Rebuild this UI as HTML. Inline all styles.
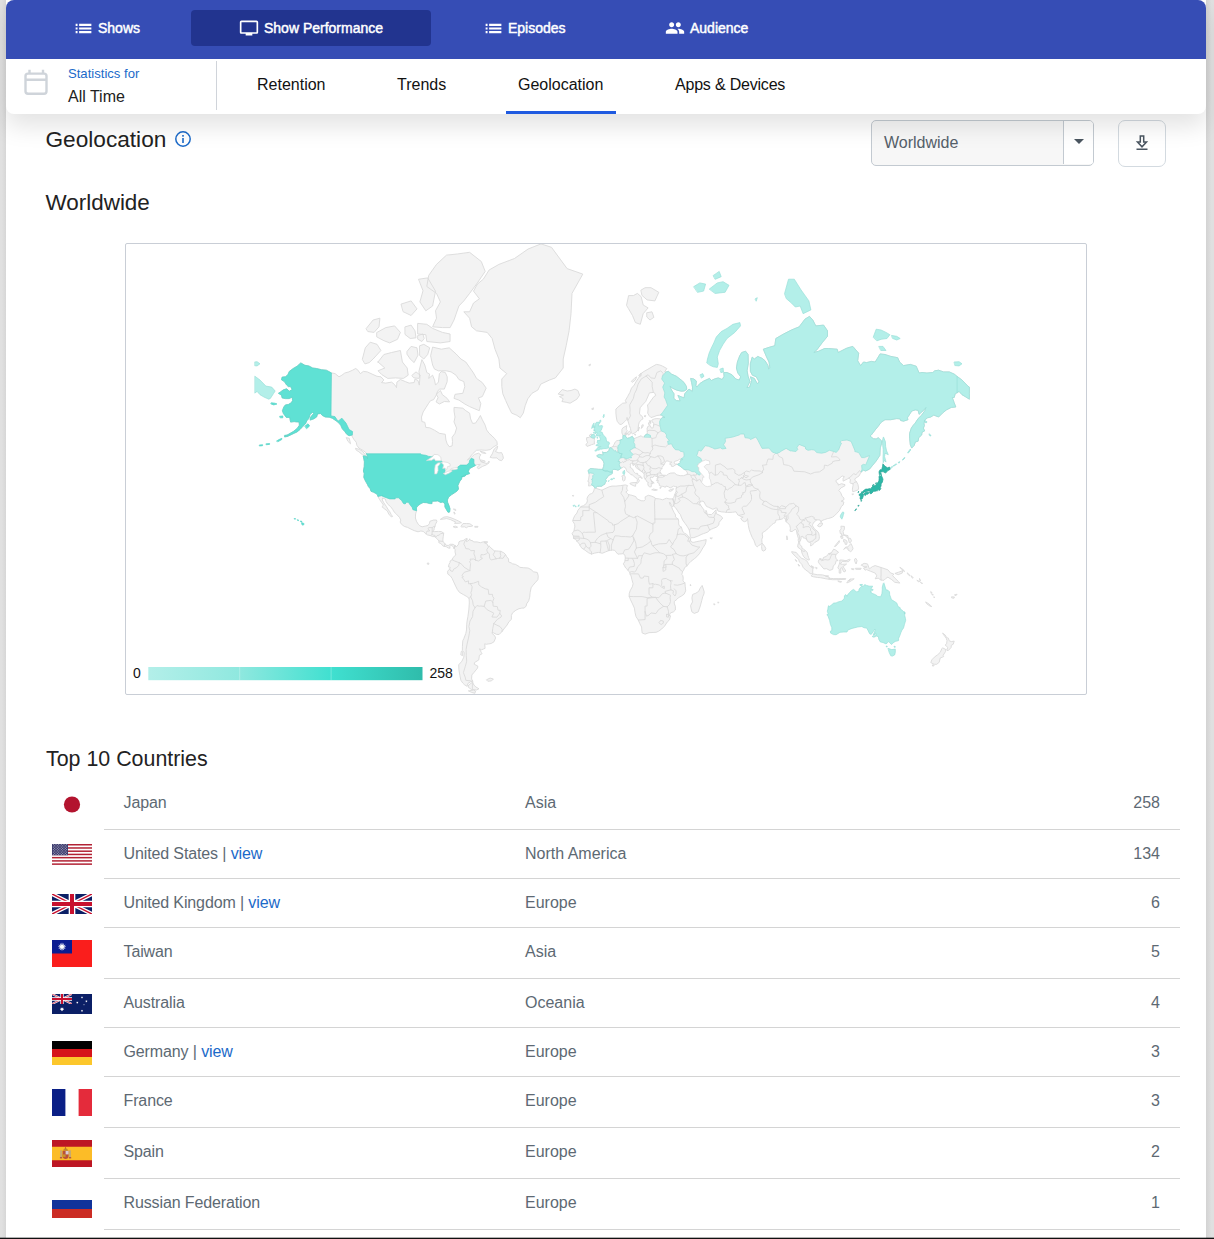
<!DOCTYPE html>
<html lang="en">
<head>
<meta charset="utf-8">
<title>Geolocation</title>
<style>
*{box-sizing:border-box;margin:0;padding:0}
html,body{width:1214px;height:1239px;overflow:hidden}
body{background:#e0e0e0;font-family:"Liberation Sans",Arial,sans-serif;color:#222;position:relative}
.panel{position:absolute;left:6px;top:0;width:1200px;height:1239px;background:#fff}
.rshade{position:absolute;left:1206px;top:0;width:8px;height:1239px;background:linear-gradient(90deg,#d3d3d3,#e0e0e0 70%)}
.lshade{position:absolute;left:0;top:0;width:6px;height:1239px;background:linear-gradient(90deg,#e0e0e0 30%,#d6d6d6)}
.header{position:absolute;left:6px;top:0;width:1200px;height:114px;background:#fff;border-radius:8px;box-shadow:0 12px 24px rgba(0,0,0,.115);z-index:5;overflow:hidden}
.topbar{position:absolute;left:0;top:0;width:1200px;height:58.5px;background:#364db5}
.nav{position:absolute;top:10px;height:36px;border-radius:4px;color:#fff;font-size:14px;font-weight:normal;-webkit-text-stroke:.45px #fff;line-height:36px;white-space:nowrap}
.nav.active{background:#22348f}
.nav svg{position:absolute;top:9px;fill:#fff}
.nav span{position:absolute;top:0}
.subbar{position:absolute;left:0;top:58.5px;width:1200px;height:56px}
.cal{position:absolute;left:17px;top:9px}
.sf{position:absolute;left:62px;top:7px;font-size:13.1px;color:#1b6ac9;line-height:15px;white-space:nowrap}
.at{position:absolute;left:62px;top:28px;font-size:16px;color:#222;line-height:20px;white-space:nowrap}
.vsep{position:absolute;left:210px;top:2px;width:1px;height:49px;background:#d0d4da}
.tab{position:absolute;top:16px;font-size:16px;line-height:20px;color:#111;white-space:nowrap}
.ul{position:absolute;left:500px;top:52.5px;width:110px;height:3px;background:#1f5ae0}
h1{position:absolute;left:45.5px;top:124px;font-size:22.65px;font-weight:normal;line-height:30px;color:#222;white-space:nowrap}
h2{position:absolute;left:46px;font-size:21px;font-weight:normal;line-height:30px;color:#222;white-space:nowrap}
.info{position:absolute;left:174px;top:130px}
.sel{position:absolute;left:871px;top:120px;width:223px;height:46px;border:1px solid #c3cad1;border-radius:5px;background:#f7f7f7;overflow:hidden}
.sel .t{position:absolute;left:12px;top:12px;font-size:16px;line-height:20px;color:#55606a}
.sel .a{position:absolute;left:191px;top:0;width:31px;height:43px;background:#fff;border-left:1px solid #c3cad1}
.sel .a i{position:absolute;left:10px;top:17.5px;width:0;height:0;border-left:5px solid transparent;border-right:5px solid transparent;border-top:5px solid #4a5560}
.dl{position:absolute;left:1118px;top:120px;width:48px;height:47px;border:1px solid #d3dae0;border-radius:7px;background:#fff}
.dl svg{position:absolute;left:11px;top:10px}
.map{position:absolute;left:125px;top:243px;width:962px;height:452px;border:1px solid #c9ced6;border-radius:2px;background:#fff;overflow:hidden}
.map svg{position:absolute;left:-1px;top:-1px}
.tbl{position:absolute;left:46px;top:779px;width:1134px}
.row{position:relative;width:1134px}
.row .ln{position:absolute;left:58px;right:0;bottom:0;height:1px;background:#d4d4d4}
.row .fl{position:absolute;left:6px}
.row .c1,.row .c2,.row .c3{position:absolute;font-size:16px;line-height:20px;color:#5d6973;white-space:nowrap}
.row .c1{left:77.5px;letter-spacing:-.12px}
.row .c2{left:479px}
.row .c3{right:20px;text-align:right}
.row a{color:#1b6ac9;text-decoration:none}
.botline{position:absolute;left:0;top:1237px;width:1214px;height:2px;background:linear-gradient(rgba(0,0,0,.3) 50%,#111 50%);z-index:9}
</style>
</head>
<body>
<div class="lshade"></div><div class="rshade"></div>
<div class="panel"></div>

<div class="header">
  <div class="topbar">
    <div class="nav" style="left:52px;width:100px"><svg style="left:14.5px;top:7.5px" width="21" height="21" viewBox="0 0 24 24"><path d="M3 13.200h2.200v-2.400H3v2.400zm0 4.100h2.200v-2.400H3v2.400zm0-8.200h2.200V6.700H3v2.400zm4 4.100h14v-2.400H7v2.400zm0 4.100h14v-2.400H7v2.400zM7 6.700v2.400h14V6.700H7z"/></svg><span style="left:40px">Shows</span></div>
    <div class="nav active" style="left:185px;width:240px"><svg style="left:48px;top:8px" width="20" height="20" viewBox="0 0 24 24"><path d="M21 3H3c-1.1 0-2 .9-2 2v12c0 1.1.9 2 2 2h5v2h8v-2h5c1.1 0 1.99-.9 1.99-2L23 5c0-1.1-.9-2-2-2zm0 14H3V5h18v12z"/></svg><span style="left:73px">Show Performance</span></div>
    <div class="nav" style="left:462px;width:110px"><svg style="left:14.5px;top:7.5px" width="21" height="21" viewBox="0 0 24 24"><path d="M3 13.200h2.200v-2.400H3v2.400zm0 4.100h2.200v-2.400H3v2.400zm0-8.200h2.200V6.700H3v2.400zm4 4.100h14v-2.400H7v2.400zm0 4.100h14v-2.400H7v2.400zM7 6.700v2.400h14V6.700H7z"/></svg><span style="left:40px">Episodes</span></div>
    <div class="nav" style="left:643px;width:110px"><svg style="left:16px;top:8px" width="20" height="20" viewBox="0 0 24 24"><path d="M16 11c1.66 0 2.99-1.34 2.99-3S17.66 5 16 5c-1.66 0-3 1.34-3 3s1.34 3 3 3zm-8 0c1.66 0 2.99-1.34 2.99-3S9.66 5 8 5C6.34 5 5 6.34 5 8s1.34 3 3 3zm0 2c-2.33 0-7 1.17-7 3.500V19h14v-2.500c0-2.330-4.670-3.5-7-3.500zm8 0c-.29 0-.62.02-.97.05 1.16.84 1.970 1.970 1.970 3.450V19h6v-2.500c0-2.330-4.670-3.5-7-3.500z"/></svg><span style="left:41px">Audience</span></div>
  </div>
  <div class="subbar">
    <svg class="cal" width="26" height="30" viewBox="0 0 26 30"><rect x="2.5" y="5.6" width="21" height="20.1" rx="2.5" fill="none" stroke="#cfd4da" stroke-width="2.4"/><path d="M2.5 11.800h21M6.5 1.800v3.800M20 1.800v3.8" stroke="#cfd4da" stroke-width="2.4" fill="none"/></svg>
    <div class="sf">Statistics for</div>
    <div class="at">All Time</div>
    <div class="vsep"></div>
    <div class="tab" style="left:251px">Retention</div>
    <div class="tab" style="left:391px">Trends</div>
    <div class="tab" style="left:512px">Geolocation</div>
    <div class="tab" style="left:669px;letter-spacing:-.2px">Apps &amp; Devices</div>
    <div class="ul"></div>
  </div>
</div>

<h1>Geolocation</h1>
<svg class="info" width="18" height="18" viewBox="0 0 18 18"><circle cx="9" cy="9" r="7.2" fill="none" stroke="#1b6ac9" stroke-width="1.5"/><rect x="8.2" y="8" width="1.6" height="5" fill="#1b6ac9"/><rect x="8.2" y="5" width="1.6" height="1.7" fill="#1b6ac9"/></svg>
<div class="sel"><div class="t">Worldwide</div><div class="a"><i></i></div></div>
<div class="dl"><svg width="24" height="24" viewBox="0 0 24 24"><path d="M7.5 11h2.800V5h3.400v6h2.800L12 15.800zM6.5 18.200h11" fill="none" stroke="#4a5560" stroke-width="1.5"/></svg></div>
<h2 style="top:188px;font-size:22.45px;left:45.5px">Worldwide</h2>

<div class="map"><svg width="962" height="452" viewBox="125 243 962 452">
<defs><linearGradient id="lg" x1="0" x2="1" y1="0" y2="0"><stop offset="0" stop-color="#b3efe9"/><stop offset="0.3333" stop-color="#8fe8df"/><stop offset="0.6667" stop-color="#40e0d0"/><stop offset="1" stop-color="#2fbcab"/></linearGradient></defs>
<g stroke-linejoin="round" stroke-linecap="round">
<path fill="#f3f3f3" stroke="#dadada" stroke-width="0.9" d="M331.2 372.8L335.1 373.6L339 376.8L341.9 375.2L344.8 373L348.8 371.9L352.6 370.2L355.6 368.5L357.5 369.7L360.4 373.6L363.4 371.4L367.3 371.9L372.1 374.1L377 376.3L380.9 376.8L383.9 380L381.5 382.6L385.8 383.1L391.6 382.1L394.6 384.6L396.5 387.6L396.9 382.1L400.4 379.5L405.3 381.6L409.2 383.1L414.1 382.6L415 379L418 380.5L419.3 385.1L419.9 377.4L418.9 371.4L421.9 359.6L424.8 365L426.8 372.5L429.7 374.1L428.7 378.4L432.6 375.2L434.5 380L435.5 385.1L438.4 382.1L439.4 373.6L441.4 371.6L445.3 372.5L447.2 376.8L447.2 381.6L444.3 389.1L439.4 389.1L437.5 391.4L436.5 394.7L433.6 399.7L430.6 400.6L428.7 403.2L425.8 407.8L423.2 411.9L421.5 417L421.9 421.6L424.8 422.3L425.8 427.4L429.7 427.8L434.5 430.2L439.4 433.3L445.3 434.3L445.9 440L447.2 443.8L449.2 446.6L452.1 446L452.5 441.6L452.1 437.3L455 433.3L456.6 428.1L454 421.9L455 417L454 411.1L454 407.4L458.9 407.8L462.8 408.2L465.8 410.7L469.6 413.1L470.6 418.9L472.6 423.4L475.5 423.1L478.4 418.9L480.4 415.5L482.3 419.7L485.2 425.2L486.6 429.9L489.1 433.3L492.1 436L494.4 438.3L496.9 441.6L497.3 444.7L494 446.6L490.1 449.7L486.2 450.3L481.3 450L476.5 450.3L472.6 453.8L469.6 457.6L467.3 460.2L470.6 457.9L474.5 454.4L478.4 453.2L480.8 454.7L479.4 457L479.8 459.6L481.3 461.8L484.3 462.9L487.2 463.5L489.1 461L489.1 462.9L486.2 464.9L482.3 466.5L478.4 468.9L477.1 467.3L480.4 464.3L477.4 464.6L475.5 465.4L472.6 467L469.6 468.6L468.3 471.3L469.6 473.6L467.1 474.4L462.8 475.9L461.9 477L461.5 479.2L459.9 481L458.9 483.2L457.9 485.6L458.5 489L457 491.1L454.2 493L451.7 494.6L448.6 497.1L447.4 500L447.6 502.3L449 505.6L450 508.8L449.6 512.1L448 512.3L446.6 509.9L444.9 506.9L444.9 504L442.9 502L440.6 502.5L437.9 500.9L434.5 501.2L432 501.2L432 503.6L429.7 503.6L426.8 502.7L423.2 502.5L420.9 503.6L418 505.6L416.4 507.8L416.6 510.7L415.6 513.8L415.4 518L416.4 521.1L418.2 524.2L419.9 525.8L422.1 526.8L425.8 526L428.1 525.4L429.5 523.3L429.9 521.3L433.6 520L436.5 520L436.9 521.7L435.5 524.2L434.9 526.6L434.2 528.2L434 530.2L432.8 531.4L434.7 531.6L438.4 531.4L441.4 531.6L443.7 533.2L443.3 536.2L442.9 539.2L442.9 541.2L444.3 543.1L445.9 545.1L448.2 545.5L450.5 544.3L453.1 544.3L455.2 545.7L454.2 548.6L453.3 546.6L451.1 545.3L449.6 546.6L450.1 548.2L448.2 548L446.2 546.6L444.3 546.4L442.9 545.9L440.8 543.5L438.8 542.7L439 541L437.1 538.8L435.5 537.4L435.1 536.6L432.6 536.6L430.6 535.6L427.7 535L426.2 534L423.2 531.4L420.9 531L418 531.8L414.1 530.6L411.1 529.2L407.6 527.4L404.3 526.4L401.4 524.2L400.2 522.1L400.8 520L399.4 517.3L396.5 514.2L394 511.8L392.6 509.3L390.7 506.7L387.8 504.3L386 501.4L385.4 499.1L382.5 498L382.3 500L383.9 502.9L386.2 506.2L387.9 509.1L389.7 511.6L391.1 514.4L392.6 516.5L391.3 516.9L388.7 514L387.4 511L384.8 509.1L381.9 506.7L383.5 505.1L381.5 502.3L379.6 499.6L377.8 496.2L377.4 494.6L375.3 493.2L373.7 492.3L371 491.3L370.2 488.7L368.4 486.6L367.3 484.2L366.3 482.5L364.7 479.5L363.8 477.2L364.2 473.6L363.4 471L364.2 466.5L364.4 461.8L363.2 455.9L366.3 456.2L367.5 458.5L367.1 454.4L366.1 453.8L365.7 452.4L362.8 450.3L358.9 448.1L356.9 445.4L356.2 442.2L354 439.6L352.3 436.7L352.3 435L349.1 435.7L346.8 434.3L344.8 431.6L342.3 428.8L340.9 425.6L339 423.1L336.1 420.8L332.2 418.2L329.2 417.2L325.3 417L322.4 415.5L320.5 413.5L317.6 413.9L316.6 417L313.6 418.9L310.1 420.1L310.7 417L313.6 413.5L312.7 412.3L310.1 414.3L308.8 418.6L306.8 420.8L305.5 423.8L302.9 426.3L300 429.5L297.1 431.9L294.1 433.3L291.2 434.7L288.3 436L284.6 436.3L287.3 435L290.2 433.3L293.2 431.6L297.1 428.5L299.4 425.2L299 421.9L296.7 421.9L294.1 421.6L290.6 422.1L290.2 420.1L289.7 417.4L286.3 417.4L283.4 413.5L282.4 410.7L283.8 407L285.4 404.9L288.3 404.5L291.2 402.8L292.6 400.6L292.2 397L289.3 398.6L285.4 398.6L282.1 397.9L281.5 395.2L278.4 393.3L280.5 391.9L283.4 389.8L286.7 388.8L289.3 391.2L292.2 389.5L290.6 386.6L288.3 386.6L286.7 385.1L284.4 381.6L281.5 379.8L282.1 377.1L285.4 376.8L287.9 374.7L289.3 371.4L293.2 368.5L297.1 366.2L300.8 362.9L304.9 365.3L308.8 365.9L312.7 368L316.6 368.5L321.4 369.7L326.3 370.2ZM520.5 417.4L523.3 413.1L525.2 405.7L527.8 398.8L532 393.3L537.9 390L540.8 384.1L549.6 380L555.4 377.9L563.2 368L563.2 359L566.2 345.7L569.1 330.8L571 313.7L572 293.4L582.8 274.1L567.1 268.6L551.5 247.3L541 243.9L528.1 249L514.5 258.5L498.9 264.4L489.1 270L483.3 279.2L477.4 284.1L473.5 291.1L479.4 298.8L473.5 303L469.6 311.8L463.8 311.8L469.6 318.2L471.6 326.8L476.5 330.8L487.2 332.4L492.1 338.5L495 349.2L498.9 359L499.9 368L506.7 373.6L501.8 379L501.8 386.6L502.8 393.8L505.7 400.6L508.6 407L511.6 413.1L516.4 415.1ZM558.4 393.8L562.3 389.5L567.1 391L571 390.5L574.9 389.1L577.9 390.5L579.6 395.2L576.9 399.2L570.1 403.2L566.2 402.3L561.9 401.5L563.2 398.8L559.4 396.6L563.2 395.2ZM479.4 410.3L480.8 403.6L478.4 397.9L482.3 396.6L486.2 388.1L482.3 382.6L476.5 378.4L473.5 373L469.6 367.4L465.8 362L460.9 359L456 353.9L449.2 347.8L441.4 349.2L432.6 347.1L430.6 355.8L432.6 365L434.5 369.1L438.4 370.8L441.4 370.8L446.2 370.8L451.1 371.9L456 375.2L458.9 379.5L463.8 381.6L464.8 386.6L462.8 393.3L455 394.3L454 398.4L458.9 400.1L464.8 404L469.6 406.6L474.5 408.7ZM378 362L383.9 354.5L391.6 352.5L400.4 350.5L402.4 362L407.2 368L408.2 375.2L403.4 378.4L395.5 377.9L387.8 378.4L381.9 374.7L378 370.8L384.8 368L378 362ZM362.4 359L365.3 347.8L370.2 342.2L377 344.3L380.9 350.5L373.1 359L369.2 362.6L365.3 363.8ZM457.9 253.9L469.6 252.3L481.3 261.5L485.2 271.4L477.4 282.9L469.6 293.4L463.8 300.9L458.9 306L454 320L450.1 327.6L442.4 327.6L432.6 326.8L436.5 318.2L435.5 310.8L440.4 301.9L436.5 293.4L426.8 286.5L428.7 275.4L436.5 264.4L446.2 255.4ZM418.9 279.2L427.7 277.9L435.5 291.1L432.6 306L425.8 310.8L419.9 301.9L422.9 291.1ZM418 323.4L426.8 324.3L432.6 328.4L442.4 332.4L450.1 334L450.1 341.5L440.4 342.9L426.8 341.5L425.8 334.7L418 334ZM377 332.4L385.8 327.6L394.6 325.9L400.4 332.4L397.5 339.3L389.7 342.9L383.9 340.7L377 337ZM405.3 326.8L411.1 325.1L415 330.8L416 337.8L410.2 338.5L405.3 334.7ZM419.9 345.7L423.8 344.3L429.7 347.8L427.7 354.5L423.8 359L419.9 355.8ZM407.2 351.2L411.1 346.4L417 347.8L418 355.1L414.1 362.6L410.2 359L407.2 354.5ZM412.1 375.2L416 371.9L420.3 375.2L418.9 378.4L414.1 377.9ZM436.5 393.8L440.4 390.5L442.4 394.7L447.2 398.4L449.6 401.9L444.3 401.5L439.4 404L436.1 401.9L437.9 397.9ZM366.3 328.4L373.1 320L379.9 318.2L379 326.8L374.1 332.4L368.2 331.6ZM401.4 304L411.1 300.9L417 308.9L411.1 315.5L403.4 311.8ZM418 335.5L422.9 334L424.2 338.5L421.9 341.5L418 339.3ZM490.3 457L492.3 453.8L494.2 449L497.7 446L497.1 449L495.4 451.5L498.9 452.9L501.6 452.6L502.8 455.3L503.4 458.2L501.6 460.7L498.9 459.9L496.9 457.9L493 457.9ZM355.8 448.4L359.5 449.4L362.4 451.2L365.1 454.4L365.3 455.9L362.4 454.7L358.9 451.8L356.5 450.3ZM346.6 437.7L349.3 438.3L350.5 443.8L348.2 441.6ZM480.4 451.2L485.2 452.6L485.8 453.5L482.1 452.9ZM480.6 459.9L485.2 461L484.3 462.4L481.3 461.6ZM440.6 519.2L443.9 517.1L447.2 516.7L451.1 517.8L455 519.4L458.7 521.1L461.5 522.7L458.9 523.3L454.6 523.4L455.6 521.9L453.1 520.9L450.5 519.6L446.6 518.6L444.3 519ZM461.1 526.2L463 523.5L466.3 523.5L469.8 523.7L472.8 525.8L471 526.4L468.1 526.6L466.3 527.8L464.6 526.8L462.2 527ZM453.5 526.6L455.6 526.2L457.6 527.2L455.6 527.6ZM475.1 526.4L478 526.4L477.8 527.2L475.1 527.2ZM453.7 509.1L455.6 509.3L455.8 510.6L454.2 509.7ZM453.9 512.5L454.6 514.2L455.2 513.8L454.4 512.3ZM485.6 541.8L487.4 541.6L487.2 542.9L485.6 542.9ZM455.2 545.7L456.2 547L458.7 544.1L458.9 541.9L460.3 541L463.2 540.6L465.8 538.8L467.1 538.4L467.1 539.6L465.9 540.2L466.5 541.6L469.3 540L469.6 538.8L470.2 540.2L472.8 540.8L473.5 541.9L477.1 541.9L480.4 542.7L483.3 541.8L485.4 541.8L483.9 542.5L487.2 544.1L487.6 545.9L489.5 546.4L492.1 549L494.4 550.9L498.5 551.1L500.8 551.3L503.8 552.8L505.3 554.2L506.7 556.7L508.6 559L508.6 561.9L511.6 563.1L512.5 563.8L515.5 564.4L519.4 566.7L519.8 567.3L523.3 567.7L528.1 568L531.1 569.6L533.6 571.8L537.3 572.5L538.3 576.2L537.9 579.7L535 582.9L533 585.2L531.1 587.8L530.1 592.8L529.7 597.2L528.7 600.8L526.6 603.9L526.2 606L524.2 608.1L521.9 608.1L519 608.7L515.9 610.2L512.5 612.9L511.4 615.5L511.4 619.4L509 621.6L507.1 625L504.6 628.1L502 631.6L499.1 634.5L496.6 634.4L492.3 632.3L492.3 633.7L494.6 635.6L495.6 637.9L494 641.8L491.1 643.5L486.2 644.3L484.7 643.8L485.1 648.3L481.7 649.8L479.4 648.8L481.3 652.4L482.1 653.7L479.4 655.3L478.8 659.9L474.5 662.6L474.3 664.3L477.8 666L477.6 668L474.3 672.1L471.8 675L471.6 679L472.8 681.2L470.6 681.8L467.9 683.4L467.1 686.3L464.8 685L462.8 683.1L460.9 680.3L459.9 675.6L458.9 669.7L458.7 664.8L461.9 661.2L463.8 657.2L464.2 652.7L462.4 650.6L462.4 646.3L462.8 640.6L463.8 638.7L465.8 633.4L466.5 630L466.7 624.3L467.1 621L467.9 616.6L468.9 609.1L469.3 602.9L469.1 598.4L466.9 596.6L463.8 594.8L459.5 592.4L457.4 589.6L455.6 586L453.7 581.9L452.1 578.4L450.3 575.8L447.8 574.1L447.6 571.2L449.6 569.1L450.3 567.3L448.4 566.9L449 564.2L450 562.5L450.1 561L452.3 559.6L452.9 557.7L455 555.7L455.8 555L455 551.9L455.2 549.7L454.2 548.6ZM472.4 682.3L468.7 685L468.1 687L471.6 689.7L473 689.5L476.5 690L479 688.8L475.9 687L473.9 685L473.2 683.4ZM469.6 690.7L473.5 690L475.5 691L474.9 693.3L471.6 692.4L468.7 691ZM486.8 679.6L490.1 678.1L493.4 679L491.5 680.9L488.2 681.2ZM461.7 651.4L462.8 651.9L462.6 655.6L461.1 655ZM427.7 563.1L428.9 563.1L428.7 564.4L427.7 564.2ZM594.6 488.5L595.8 488.3L600.3 489.7L601.9 490.2L605 488.7L609.1 486.8L612 486.1L615.9 486.1L620.8 485.6L625.3 484.9L627.6 485.6L626.8 487.1L626.8 489.2L627.8 490.4L625.8 492L627.6 493.7L628.6 494.6L631.9 495.3L635.8 496.6L636.8 498.7L641.2 500.7L644.2 500.9L645.3 499.6L645.1 496.9L648.3 495.3L651.2 496L654.9 497.6L655.3 498.5L659.4 498.9L662.7 499.8L664.6 498.9L666.6 498.2L669.1 498.9L672.8 498.9L674.2 502.9L673.2 506.2L672.9 506.8L671.7 505.6L669.7 502L669.3 502.9L670.5 505.6L671.7 506.9L672.4 509.1L674.2 512.7L675.6 515L675.4 516.9L678.1 519L678.7 521.1L678.7 524L679.3 525.8L681.4 527.2L682.6 531.2L683.2 532L684.5 533.2L686.5 534.2L688.8 536.8L690.2 537.8L690.6 540L690 540.2L690.6 540.4L691.9 542.2L693.9 542.3L696.8 541.6L699.8 541L702.7 540.4L706.2 539.6L705.8 542.3L705.2 544.3L703.3 547.2L701.7 549.9L699.8 553.2L696.8 556.7L694.5 558.6L691 561.3L689 563.3L687.1 565.8L684.7 567.5L683.6 570.2L682.6 571.6L681.8 574.5L682.8 575.6L683.2 578L683 580.9L684.9 582.9L685.3 586.8L685.7 590.8L684.1 594.2L681.2 596.2L678.3 597.8L676.9 599.4L674.2 601.5L674.4 603.9L675.4 606.4L675.4 610L673.4 611.9L670.5 612.9L669.7 614.4L670.3 616.4L669.5 619.9L667.6 621.6L666.6 623L664.6 626.1L661.7 629L658.8 631.1L656.1 632.3L652 632.5L649 632.7L645.1 634.1L642.2 633L641.8 630L641.6 627L639.9 623.8L638.3 620.1L636 616.6L635 612.3L634.4 608.1L632.5 603.9L630.5 599.8L629.2 596.4L629.2 593.8L630.1 590.8L632.3 586.8L633.1 583.8L631.9 579.5L631.1 576L630.1 574.1L629.5 572.2L629.2 571.8L628 570.2L625.6 567.9L624.3 565.4L623.3 563.8L624.7 561.9L624.9 560.6L625.3 558.1L625.1 556.1L624.7 554.8L622.9 553.6L622.3 553.8L619.8 554L617.9 554.2L615.9 551.9L614.7 550.3L612.8 550.1L610.8 550.3L608.5 550.7L605.8 551.8L602.2 553.3L600.1 552.7L598.4 552.4L594.4 553.2L591.5 554.1L588.6 552.8L585.1 550.3L583.7 549.2L581.8 548.2L580.4 546.1L579.4 544.1L577.7 542.1L576.9 541.2L575.7 539.4L573.6 538.4L573.4 536.4L573 535.2L572 533.8L573.4 531.6L574 531L574.4 528.2L574.9 527L574.6 524.4L574 523.1L572.9 521.5L573.2 519L574.9 515.4L576.9 513.1L577.9 510.3L581 506.5L583.7 505.6L586.6 503.2L587.4 500.9L587 498.5L588 496.2L589.6 494.3L591.3 493.7L592.9 492.7L593.9 490.4ZM702.3 585.8L704.2 591.8L704 593.8L702.7 596.8L701.7 600.8L700.3 606L698.2 611.9L694.3 613.4L691.9 611.9L691 608.1L690.6 605.6L692.5 601.9L691.9 597.8L692.7 594.4L695.9 593.2L698.8 591.2L699.8 588.8L701.3 586.6ZM588.6 485.6L589 482L587.8 481.5L588.6 479.2L589.2 475.2L588.8 473.4L588.8 472.9L588 470.5L590.5 468.5L594.8 468.9L598.7 469.3L602.6 469.4L603.6 466.5L604 463.5L603.6 461.8L601.9 459L600.3 457.9L597.6 457L596.8 455.6L599.3 454.4L602.2 454.9L603.2 454.7L602.6 451.8L603.8 452.6L606.5 452.4L609.1 450.6L609.3 448.1L611 447.5L612.8 446.6L613.9 444.7L615.3 441.9L616.9 440.6L619.8 440.3L622.3 439.3L622.9 438.7L623 435.3L621.9 433L621.9 429.5L622.9 427.8L626.8 425.6L626.2 429.5L627.4 430.6L625.6 433.3L624.9 435L625.5 435.7L625.8 437L627.4 438.3L629.7 437.7L632.3 436.3L633.8 438.7L637.4 437.3L641.2 435.7L642.4 437L644.4 436.8L645 435.2L647.1 434L647.3 432.6L647.2 431.3L647.1 428.1L648.3 426L650.2 425.6L651.4 428.1L653.1 427.9L653.6 424.9L653.9 423.1L652 421.9L651.8 420.1L654.3 418.9L656.9 418.6L660.8 418.9L662.7 417.4L665 417.4L662.7 416.3L661.9 415.1L660.4 415.1L656.9 415.5L654.9 416.3L651 417.6L649 415.5L647.7 413.1L648.1 409.1L647.5 404.9L648.3 404.5L651 400.6L653.9 396.6L655.7 395.6L654.9 393.3L653.3 392.4L649.4 392.9L647.7 397L645.7 401.5L642.2 405.3L640.1 407.8L639.5 413.1L639.7 414.3L642.4 416.6L643 418.9L641.4 419.7L639.3 422.3L638.5 424.9L638.1 429.2L637 431.3L634 433.3L632.3 433.8L631.3 433L630.9 430.9L630.5 428.5L629.4 425.6L628 421.2L627.8 420.5L627 417.4L626.6 419.7L624.7 421.6L621.8 424.2L619.8 424.5L617.1 421.2L616.3 417L615.9 413.1L615.9 409.1L618 407L622.7 403.2L626.4 402.8L625.3 400.6L627.6 396.6L629.9 392.4L631.5 388.1L634.2 385.1L636.4 381.1L638.3 378.4L641.2 373.6L643.2 371.9L647.1 369.7L651 367.4L656.3 364.4L659.8 365L662.7 366.2L666.8 368.5L664.6 371.9L666.2 371.9L668.5 371.4L671.5 374.1L676.4 376.3L681.2 380L684.1 382.6L686.5 386.6L686.7 389.5L684.1 391L681.2 391.2L676.4 390L672.4 388.1L669.9 386.1L671.5 390L674 393.8L673.8 398.4L676.4 400.6L680.2 401L679.3 398.4L677.9 395.4L681.2 396.8L684.1 397.9L684.7 393.8L687.1 391L689 389.1L692.3 391.4L692.5 387.1L691.6 382.6L690.6 378.4L693.9 379L696.4 381.1L695.9 385.6L696.8 387.1L699.8 383.6L703.6 381.1L709.5 378.4L711.4 380.5L714.4 379L718.3 377.9L722.2 379.5L724.1 376.3L723.7 372.5L727 372.5L731.9 374.7L735.8 379L739.3 380L740.7 376.8L737.8 373L736.4 368L737.4 362L739.7 355.8L741.7 352.5L745.6 351.2L748.1 354.5L748.3 363.2L747.1 370.8L748.1 376.3L749.9 381.6L746.9 387.6L749.7 387.1L751.6 380.5L750.4 376.8L754.3 378.4L757.3 383.6L759.2 382.1L756.3 376.8L752.4 375.2L750.4 371.4L750.3 363.8L752.2 357.1L754.3 359L757.9 356.4L759.2 357.1L762.1 358.3L765.1 360.8L768 365.6L768.6 369.1L769.9 368L769 362L766.6 357.1L763.3 349.2L769.9 347.1L774.8 345.7L775.8 338.5L783.6 334L791.4 330L799.2 326.8L805 319.1L809.5 316.4L812.8 320L815.8 325.9L823.6 325.1L827.5 330.8L827.5 336.3L822.6 342.2L816.8 349.9L813.8 352.5L818.7 351.2L824.5 348.5L828.4 348.5L837.2 349.2L838.2 352.5L846 348.5L847.9 347.8L852.8 346.4L858.7 353.2L857.7 360.8L860.6 365.6L863.5 362L866.5 362.6L871.3 361.4L875.2 362L878.2 357.1L880.1 353.9L885 354.5L890.8 356.4L897.7 357.7L899.6 362L903.5 365.6L910.3 364.4L916.2 366.2L919.1 373L922 372.5L926.9 373L932.8 372.5L934.7 370.8L938.6 370.2L943.5 371.9L949.3 371.9L954.2 374.1L957.1 376.4L962 380L967.9 386.1L969.4 387.1L969.4 391L969.4 393.3L969.4 398.4L969.4 399.2L965.9 397L962 394.7L959.1 391.4L955.2 393.8L954.2 397.5L952.3 397.5L954.2 402.8L955.8 407L951.3 407.4L946.4 409.9L942.5 413.1L938.6 417L933.8 415.1L930.8 417L927.5 417.8L924.6 420.1L924 423.8L924.4 425.6L923.4 428.1L924.6 430.9L922 432.3L921.7 435L918.7 437.7L918.1 441.2L915.4 441.9L914.2 445.4L911.7 448.1L910.3 444.7L909.6 438.3L909.6 433.3L911.3 428.1L913.3 425.2L915.2 423.1L918.1 418.6L921.7 415.1L924.8 410.7L926 407.4L923.6 410.3L919.1 414.3L918.1 410.3L915.2 409.9L911.7 411.1L908.4 416.3L907.4 417.8L908 419.7L903.5 421.2L900.6 420.5L900.2 418.9L896.7 418.6L890.8 419.7L885 419.7L881.1 422.3L878.2 426.3L875.2 429.9L871.3 435L870 436L873.3 438.7L876.2 439L878.2 437.7L881.7 440.9L881.5 443.8L880.3 447.8L880.1 450.9L879.9 455.3L876.2 461L872.3 465.7L869.4 469.2L865.5 471L863.4 470.2L861 472.1L859.1 475.9L855 478.7L854.8 480.2L856.5 481.7L857.9 484.4L858.7 488L858.1 489.9L855.4 490.9L852.8 491.8L852.4 489.2L853 485.6L853 483.8L850.5 483.2L849.9 482.7L850.5 479.5L848.7 478.2L847.9 478.7L844 480.7L843.1 481.2L843.1 478.2L844.4 476.7L842.1 475.9L839.2 478.5L835.7 480.7L837.2 483.2L838.2 483.7L838.2 485.1L841.5 483.7L845 484.7L844.8 485.9L841.1 487.8L838.8 490.4L840.7 492.7L842.1 496.2L843.9 498L843.9 499.8L841.1 501.2L843.9 502L843.1 505.1L841.5 506.2L839.4 510.6L836.4 513.8L834.3 515.9L832.3 517.3L828.8 518.4L827.5 518.6L824.5 519.6L821.6 520.7L821.2 522.5L820.1 520L817.3 519.8L816.8 519.9L814.4 521.7L812.7 524.2L812.5 525.8L814 528.2L816 530.2L817.3 531L818.7 533.2L819.3 536.2L819.3 538.2L818.7 540.2L815 542.3L814.4 543.1L812.8 544.5L811.3 545.7L810.5 545.9L810.9 543.1L809.8 542.3L808 541.9L806.8 539.8L805 538.2L803.1 537.8L802.9 536.3L801.1 536.6L801.1 538.8L799.6 542.1L799.8 544.7L801.7 546.2L802.1 548.6L803.7 549.2L805.2 550.5L807.2 552.3L807.8 555.2L808.6 557.5L809.5 559.8L808 560L805.4 558.3L803.7 556.7L802.5 554.4L801.7 552.1L801.4 550L800.6 549.2L797.8 547.2L797.8 545.1L798.7 542.3L798.2 540.2L798.4 538.4L797.4 535.2L796.7 532.6L796.5 530.2L795.1 529.4L793.7 530.4L792 531.6L790 531.2L790.4 528.2L789.8 525.6L788.5 523.5L787.3 522.9L786.1 521.7L785.5 520L785.2 518.4L783.6 517.8L782.2 519L779.7 519.6L777.8 519.8L775.8 520.2L775.6 521.7L775.2 522.7L773.5 523.5L771.9 524.6L769.9 526.8L768.6 527.8L766.6 530L764.3 531.6L762.3 532.8L762.3 534.2L762.7 537L761.8 539.4L762 542.5L760.8 544.5L758.6 545.5L757.3 546.9L755.5 545.3L754.9 543.1L754 540.6L752.2 537.4L750.6 533.6L750.1 532.2L749.1 529.2L748.3 525.2L747.9 522.7L747.9 520.9L747.5 518.6L746.9 520.7L744.6 521.7L742.6 520.9L740.7 518.4L743.2 517.1L740.3 516.5L739.1 515.4L737.8 515L736.8 513.1L736 511.8L732.3 512.3L727.6 512.5L726.3 512.3L724.3 512.1L721.2 511.8L717.9 511L717.1 508.2L715.9 508L712.8 509.3L708.7 507.3L706.6 506.5L705.2 504.3L704 501.8L701.7 500.9L700.9 501.8L699.8 502L699.6 503.2L700.5 505.1L702.9 508.4L704 509.9L704 511.6L705.2 513.1L705.2 511.6L706 510.3L706.8 512.1L706.8 514.2L708.7 514.4L711.4 514.6L712.2 513.8L714 512.1L716.1 509.7L716.1 512.7L716.5 513.8L720.4 515.7L722.8 518L719.2 522.3L718.7 525.2L716.3 527.2L713.8 528.2L711.4 529.2L709.7 530L707.9 532L703.6 533.6L701.9 534.2L697.8 536.2L693.9 537.6L691 537.8L690.4 536.6L689.8 533.6L689.4 530.4L688 527.8L687.1 526.2L685.1 523.5L682.6 520L681.2 516.9L680.4 514.6L678.7 512.7L677.3 510.3L675.4 507.5L673.6 506L674.4 503.2L674.2 502.9L672.8 498.9L673.8 497.3L674.4 495.5L674.6 494.8L675.4 493L676.2 491.3L676 489.2L676.2 488.3L676.7 486.6L675.4 486.6L673.6 486.1L670.1 488L668.5 486.8L666 486L665.4 487.3L662.9 486.3L661.1 486.3L659.4 485.6L659.2 483.4L657.4 482.5L658.4 480.7L657 479.2L657.2 478.2L659.8 477.2L662.7 477.1L664.5 476.3L662.7 475.7L662.9 475.2L666.6 475.4L668.5 473.9L670.5 473.1L674.4 472.9L676.9 474.9L680.2 475.7L683.6 475.7L687.1 474.4L687.5 472.9L686.1 470.5L684.1 469.4L682.2 467.8L679.9 466L678.9 465.4L677.5 464.6L678.1 463.9L679.5 463.5L680.2 462.4L680.1 461L680.8 460.4L682.8 459.5L682 459L680.6 459.3L679.3 459.3L677.9 460.4L675 461.3L674 462.1L675.2 464.3L677.3 464L675.2 465.1L673.2 466.5L671.3 466.2L671.3 464.6L669.5 464L671.9 462.1L669.5 462.1L668.5 461L666.2 461L665 462.9L664.1 464.6L662.1 467.3L661.9 468.6L660.6 470L660 471.8L660.8 473.1L662.3 474.9L662.7 475.6L659.8 475.7L658.2 477.2L657.2 478.1L658.4 476.7L656.9 476.5L654.9 475.9L653.7 475.9L652.8 477.7L650.8 477L650.2 478.2L651 480L651.6 481.5L652.9 483.9L651 483.2L651.4 484.9L651.2 486.8L649.8 486.9L648.5 486.1L647.7 483.9L648.5 482.5L647.3 482.2L646.5 481L645.5 479.2L645.1 479L644 477L644.2 474.9L644 473.4L642.2 472.1L641.4 471.4L638.1 469.2L635.8 467.3L635.2 465.1L634.2 464.3L633.3 465.7L632.7 463.9L633 463.4L631.7 463.2L630.1 464L630.5 465.4L630.1 467.3L632.5 468.9L633.8 471.8L635.6 473.4L637.7 473.4L637.2 474.4L639.1 475.4L641.2 476.7L642.2 478L641.9 478.7L641.1 477.5L639.7 477L638.5 478.2L638.3 479L639.5 480.7L638.5 482.2L637.4 483.4L636.7 482.7L637.2 481.5L637.4 479.7L636.6 478.2L635.2 477.5L633.8 476.2L632.7 475.2L630.7 474.5L629.9 473.6L628.8 472.3L627.8 472.1L626.6 470.8L626.2 469.2L625.3 467.6L623.5 466.8L621.8 468.1L620.8 468.4L619.6 469.4L617.9 470.2L616.5 469.7L614.7 469.4L613.4 469.4L612.2 470.8L612.4 472.1L612.4 473.4L610.4 474.7L608.5 475.4L607.9 476.5L605.6 479.5L606.5 481.3L605.2 482.5L604.8 484.2L603 485.1L601.9 486.2L599.3 486.3L597.6 486.3L595.7 487.7L595.2 488L593.9 486.8L593.7 485.9L591.7 485.1L590.7 485.6ZM626.6 305L628.6 295.6L633.4 295.6L637.4 293.4L641.2 296.7L643.2 305L648.1 307.9L643.2 313.7L640.3 324.3L635.4 322.6L632.5 315.5L628.6 308.9ZM641.2 290L645.1 287.7L651 287.7L658.8 292.3L654.9 300.9L647.1 299.9L642.2 295.6ZM647.1 312.7L652 311.8L653.9 317.3L650 320L647.1 317.3ZM594.4 438.2L594.3 440.6L594.4 444.1L593.7 444.1L591.5 444.7L590 445.4L587 446.4L585.9 445L586.1 444.1L587.6 442.8L586.8 440.6L586.5 440L586.6 437.7L589.4 437.3L590.2 436.3L589.2 436L590 434.5L591.9 434L591.9 434.8L591.5 435.8L590.4 436.8L591.9 437.8L593.3 438ZM627.8 432.6L629.5 431.3L630.7 432.6L629.9 434.3L629 435.2L628 434.3ZM625.3 433.3L627 433.3L627 434.8L625.6 434.7ZM641.4 428.1L642 424.9L643.4 424.9L642.8 426.7ZM648.9 422.7L651 422.3L650.6 423.8L649 424.5ZM649.4 420.8L650.8 420.8L650.4 421.8ZM638.1 430.6L639.3 427L638.5 430.6ZM652 489.7L653.3 489L656.5 489.7L657.4 489.9L654.9 490.5L652.2 489.8ZM669.1 490.4L670.5 489.6L673.6 488.7L672.4 490.4L670.5 491.3L669.3 491ZM630.3 483.2L632.1 482.7L636.6 482.5L635.6 484.9L635.6 486.3L634 485.9L630.5 484.2ZM622.1 475.9L624.1 475.1L625.3 477L624.9 480.2L623.5 481L622.5 480.2L622.5 477.5ZM651.4 481L653.1 481.7L654.1 483.2L652.9 482.7L651.6 481.5ZM656.7 480.2L657.8 479.9L657.6 480.7L656.9 480.7ZM660.2 487.5L661.1 487.1L660.9 488L660.4 488.3ZM572.6 495.5L573.6 495.4L573.4 496ZM591.9 408.7L593.5 407.8L593.1 409.5ZM589 365L590.5 364.1L590 365.6ZM631.5 381.1L634.4 378.4L636.6 376.8L635.4 380L632.5 382.1ZM638.9 375.2L641.2 373L640.9 375.8ZM634.8 434.3L635.6 434.3L635.4 435ZM644.4 415.9L645.7 415.5L645.3 416.6ZM818.1 524.8L819.9 523.1L822.4 523.1L822.6 524L821.4 526L819.7 526.8L818.1 526.2ZM762.5 543.5L764.5 546.1L765.8 548.4L765.3 550.1L763.3 551L762.1 550.3L761.6 547ZM792 551.7L796.3 552.5L798.6 555.4L801.9 558.5L804.3 559.2L807.4 561.5L808.6 564.4L810.1 566.2L812.8 568.3L812.7 573.7L810.1 573.8L808.8 572L805.6 570L803.1 567.3L801.7 564.2L799.4 561.9L798.6 559.2L795.7 556.7L792.4 553.2ZM811.3 575.6L813 573.9L817.3 574.7L822.4 574.9L825.7 575.8L829.4 577.6L829.2 579.3L825.9 578.8L820.6 577.7L817.7 577.5L813.6 576.8ZM818.5 560.8L819.9 558.6L823 559.6L823.4 557.5L826.5 556.3L828.8 553.6L831.4 552.8L833.7 549.1L835.7 550.1L838.6 552.3L836.2 554.2L835.5 556.1L836.1 558.8L838.2 560.6L836.1 560.8L835.3 564L833.3 566L832.7 569.3L829.8 570.4L826.5 568.7L823.8 568.9L821 565.6L818.9 563.1ZM840.1 560L842.1 560L846 560.7L849.7 559.2L850.3 559.8L848.5 561.7L846.4 561.7L842.1 561.6L840.3 564L842.5 564.3L846.6 564L844 566L842.9 566.4L844.6 568.9L845.8 571L844 572L842.9 570.2L842.1 567.7L840.7 568.1L840.9 573.1L839.2 573.1L839.2 569.3L837.8 567.9L839 564.8L839.8 562.3ZM861.4 565L864.1 563.3L867.5 563.9L869.4 568.9L872.3 566.7L875.2 565.6L881.1 567.5L887.9 569.8L890.5 572.9L893.8 574.1L892.6 575.6L894.8 578L898.6 581.7L899.8 583.1L894.8 582.3L891.8 579.7L887.9 577.2L885.6 578.6L884 580.3L881.1 580.1L878.2 578.2L875.2 578.8L876.8 575.8L875.2 573.1L870.4 571.2L866.5 569.6L865.1 570.2L863.5 568.1L867.1 566.9L863.9 566.7L861.6 565.2ZM841.3 526.2L844.4 526.4L844.4 529.2L843.1 531.4L843.7 534.8L847.9 535.6L848.1 538L846.6 537.2L845.2 535.4L843.5 535.4L841.3 535.4L841.9 533.8L840.3 533.6L839.8 530.6L840.9 529.2ZM843.9 549.1L845.8 547L847.6 547L849.5 545.1L850.9 543.5L852.4 546.4L853 548.6L852.2 550.3L850.7 551.7L847.9 549.9L847.9 548L846 548ZM848.5 538.2L850.5 538.4L851.5 540.8L850.3 542.7L849.3 542.7L848.7 540.4ZM844 539.6L846.2 540.2L847.2 542.1L846.6 544.5L845.2 544.3L844.8 541.9L843.9 541.8ZM834.7 546.2L839.2 540.6L839.4 542.1L835.9 546.1ZM840.9 536.4L842.9 536.8L842.7 538.4L841.7 538.4ZM847 582.5L849.9 579.1L854.2 578.8L851.8 580.5L848.7 582.3ZM829.4 578.3L833.7 578.6L838.2 578.6L841.1 578.6L845.8 578.6L845.6 579.3L840.1 579.5L836.2 579.7L832.3 579.7L829.4 579.3ZM838.2 580.9L841.7 581.7L840.7 582.3L838.6 581.7ZM854.8 559L855.8 558.3L857.1 560.6L856.1 564L855 561.9ZM855.8 568.3L861.2 568.3L860.6 569.4L856.1 569.3ZM851.8 568.7L854.2 568.9L853.4 569.8L852 569.4ZM895.3 573.3L898.6 572.2L902.9 570.6L902.2 573.1L898.6 574.5ZM900.2 567.5L903.5 569.8L904.5 571.6L903.3 570.6L900.6 568.3ZM907.6 573.1L910.2 575.6L909.4 575.8L907.8 574.1ZM911.3 576L913.3 577.6L912.7 578ZM917.2 580.5L919.7 581.5L919.1 581.7ZM919.7 578.8L920.7 580.9L920.1 580.7ZM920.7 582.5L922.6 583.4L922 583.4ZM931 591.8L932.2 592.8L931.4 593.2ZM932.2 594.2L933.4 594.8L932.6 595ZM934.1 597L934.9 597.4L934.1 597.4ZM926 602.1L928.9 603.9L931.8 606.6L930.4 606.4L926.9 603.9ZM951.9 596.8L954.4 597L954 598.2L952.1 598ZM954.8 594.8L957.1 594.2L956.2 595.4ZM811.5 565.8L814 567.3L813.8 568.3L812.3 567.3ZM816 567.5L817.3 568.1L816.6 568.7ZM795.5 559.8L797.1 561.2L796.5 561.3ZM798.4 564.4L799.8 565.8L799.2 566ZM825.9 576L828.4 575.8L828.3 576.4L826.1 576.4ZM710.3 538L712.4 538L711.6 538.6ZM786.9 536.2L787.5 538.2L787.1 540L786.7 538.2ZM852.2 494.1L853.6 493.9L853 494.6ZM714 603.9L715 604.1L714.6 604.8ZM718.1 602.1L718.9 602.3L718.5 602.9ZM690.6 584.8L691 585.6L690.4 585.4ZM942.9 633.3L945.3 635.1L946.6 637.5L948.4 638.2L949.2 640.8L951.3 641.6L954.2 641.1L953.2 644.3L951.3 645.3L951.1 647.5L948 650.8L946.8 650.1L947.8 647.3L945.1 645L946.6 643.8L947 640.6L946.2 638.2L943.5 634.6ZM942.9 648L946 649.6L945.5 651.6L943.1 655.3L943.7 656.6L940.2 658L939.2 662.3L936.7 664.3L934.3 664.3L930.8 662.6L931.8 659.9L934.3 657.2L937.6 654.8L940.2 652.4L941.7 649.1ZM933 664.8L934.1 665.1L933.8 666L932.8 666Z"/>
<path fill="none" stroke="#dadada" stroke-width="0.9" d="M426.2 534L426.4 532.6L427.1 531L429.7 531L428.1 528.8L428.7 527.6L432.2 527.6L432.2 531.4L432.8 531.4M432.2 527.6L434 526.4L434.9 526.6M432.2 531.4L432 534.4L430.6 535.6M432 534.4L433.6 535.2L434.9 535.4L435.1 536.6M435.5 537.4L437.1 535.6L439 535.2L440.8 533.6L443.7 533.2M439 541L441 541.2L442.9 541.4M444.3 546.4L444.5 544.9L445.1 543.9M467.1 539.6L464.8 541.2L463.8 544.1L465 546.4L465.8 548.6L469.3 549L470.8 550.7L474.5 550.5L473.9 553.8L474.9 556.1L475.7 560.2M475.7 560.2L473.7 559L470 559.2L470.8 560.6L469.6 561.5L470.6 563.5L469.8 570.6M469.8 570.6L468.3 569.8L464 567.1L461.9 564.4L459.3 562.7M459.3 562.7L457 561.9L454.6 561L452.3 559.8M459.3 562.7L458.7 565.4L456.8 567.5L453.7 569.1L452.7 571.4L450.9 571L449.6 569.1M469.8 570.6L464.2 572.3L462 575.3L463.4 576.8L461.9 577L464 579.9L465.4 581.9L468.5 580.9L468.5 583.8L470.4 583.7M470.4 583.7L472.2 586.8L471.6 590.8L470.8 592.8L471.6 594.8L470.6 596.8M470.6 596.8L469.1 598.4M470.6 596.8L472.6 600.8L473.2 605L475.1 607.7M470.4 583.7L473.5 583.2L478.6 581.3L478.8 584.8L481.3 586.8L485.2 588.8L488.2 589.4L488.8 594.4L492.5 594.4L492.7 596.6L494 598.2L492.7 601.5L492.8 602.2M492.8 602.2L490.9 600.4L485.8 601L484.1 606.4M484.1 606.4L480.8 606L479.4 606.2L476.9 605.6L475.1 607.7M475.1 607.7L473 611.2L472.6 616.6L470 621L468.9 626.5L469.8 630.7L468.7 637L467.3 643L466.1 649.3L466.3 655.8L466.7 661.2L465.2 666.8L463.4 672.6L465.2 677.2L465.8 680.3L472.8 681.2M472.4 682.3L472.4 689.7M484.1 606.4L487.2 609.8L493 612.7L493.8 613.2L491.9 617L496.9 617.2L499.7 613.6M492.8 602.2L493.2 606.2L497.3 606.6L498.1 610.2L500.3 610.4L499.7 613.6M499.7 613.6L501.4 615.1L501.2 617L497.3 619.4L493.8 623.6M493.8 623.6L496.9 625.2L499.9 626.5L502.2 629.3L502 631.6M493.8 623.6L492.7 628.8L492.3 632.3M489.1 546.1L486.8 549.6L487 551.1L487.8 552.5M487.8 552.5L486.4 553.8L483.7 554.8L481 554.6L480.8 557.7L482.5 558.3L478.4 561L475.7 560.2M487.8 552.5L489.3 554L489.7 558.1L491.1 560L496 558.8M496 558.8L494.4 556.1L493 554.8L494.4 552.5L494.8 550.9M496 558.8L497.1 558.6L499.7 558.1M499.7 558.1L500.8 555.7L500.1 553L500.8 551.3M499.7 558.1L503 558.3L505.3 554.8M455.2 545.7L454.2 548.6M601.9 490.2L602.8 493.9L603.8 496.6L599.1 499.6L595.4 502.3L589.2 504.7L589.2 507M589.2 507L580.4 507M589.2 507L589.2 510.6L582.8 510.6L582.8 516L580.8 516.9L580.6 520.5L572.9 520.5M589.2 507.8L596.8 512.7M596.8 512.7L593.5 512.7L595.4 532.2L588 532.2L585.3 532.4L583.7 532L582.4 533.6M582.4 533.6L579.8 531L577.9 530L574 531M596.8 512.7L608.5 520.9L608.5 521.7L612.4 523.5L612.6 525.2L614.4 524.9M614.4 524.9L617.9 523.7L620.8 521.3L629.5 515.9M629.5 515.9L625.6 513.8L624.7 509.9L625.5 506.2L624.7 501.4M624.7 501.4L623.7 497.3L620.8 493.2L622.3 490.4L622.9 485.9M624.7 501.4L626.2 499.6L628.6 496.2L628.6 494.6M655.3 498.5L654.5 501.8L654.9 519M654.9 519L654.9 523.1L652.9 523.1L652.9 524.2M652.9 524.2L637.4 516L635.4 516.9M635.4 516.9L633.8 517.8L629.5 515.9M654.9 519L678.1 519M635.4 516.9L637.2 522.1L636.4 529.2L632.7 535.8M632.7 535.8L630.5 537L625.6 536.6L621.8 536.6L618.8 536L614.9 535.8L613.2 539.8M613.2 539.8L610.8 538.6L608.1 537.2L606.5 533.2M606.5 533.2L613 532.4L614.4 530L614.4 524.9M606.5 533.2L602.2 534.8L600.3 535.8L597.6 538.2L595.4 541.2L595.4 542.3M595.4 542.3L590.5 542.7M590.5 542.7L588.8 540.2L586.1 538.8L583.9 538.4M583.9 538.4L582.4 533.6M583.9 538.4L579.4 538L573.6 538.4M579.4 538L579.4 539.8L576.9 541.2M573.4 536L579.2 536.2L579.2 536.8L573.4 537M580.2 545.1L581.8 543.3L584.7 543.1L586.1 546.1L583.7 549.2M586.1 546.1L588 548.2L589.6 547.8L590 550.3L591.5 551.9L591.5 554.1M589.6 547.8L591.1 546.2L590.5 542.7M600.1 552.7L600.9 547.2L600.7 543.9L595.4 542.3M600.7 543.9L600.7 541.2L606.1 541L610.8 538.6M608.5 550.7L607.3 546.1L606.1 541M609.3 550.5L609.3 545.1L607.7 541.2M611.4 550.1L611.4 545.1L613.2 539.8M622.9 553.6L624.7 549.9L628.6 549.2L631.1 545.7L633.8 540.8L633.4 538.2L632.7 535.8M633.6 537.4L635.8 543.1L636.4 548M636.4 548L642.2 547L647.1 544.1L650.8 541.2M650.8 541.2L649 537.8L650 534.2L652.9 531.8L652.9 524.2M636.4 548L634.4 551.9L637.5 558.3M625.3 558.1L632.1 558.3L637.5 558.3M625.3 560.6L628.2 560.6L628.2 558.3M628 570.2L629.5 567.1L634.2 566.4L634.4 563.5L633.3 560L632.1 558.3M630.1 572.2L631.5 571.6L634.4 572L636 570.8L637.7 566.7L640.9 563.5L641.2 559.6L642.4 555.7M637.5 558.3L638.5 555.7L642.4 555.7M642.4 555.7L644.2 552.8L650 554.4L654.9 552.8L659.6 552.7M659.6 552.7L654.9 548L652 545.1L650.8 541.2M652.9 545.7L658.8 543.9L666.6 543.5L669.1 539.4L670.7 541.8L672.6 544.1M672.6 544.1L670.5 547L674 549.6L676.2 553.6M672.6 544.1L674.2 541.2L676.5 537.8L677.3 534.6M677.3 534.6L678.3 529.2L681.4 527.2M677.3 534.6L680.2 534L684.1 534.4L688.8 538.2M688.8 538.2L687.7 541.2L690 541.2L690.5 540.2M690 541.2L689.6 542.1L691.9 545.1L697.8 547L699.8 547L693.9 552.8L688 554.4L687.9 554.9M687.9 554.9L686.1 557.1L686.1 564L687.1 565.8M687.9 554.9L683.2 555.9L680.2 555.6L676.4 554L676.2 553.6M676.2 553.6L672.4 554.4L671.5 555.3L666.6 555.4L666.2 555.7M666.2 555.7L663.7 553.8L659.6 552.7M672.4 554.4L673.4 556.7L674.4 559.6L672.4 562.1L672.3 564.4M672.3 564.4L679.5 568.3L679.7 569.3L682.6 571.6M666.2 555.7L667 558.3L664.1 561L663.9 565.2M663.9 565.2L665.6 564.4L672.3 564.4M663.9 565.2L663.1 567.5L663.1 571M665.6 564.4L666.2 567.1L665.4 568.3L666.2 568.9L664.6 571L663.5 571.2M662.7 567.7L665.6 567.1M666.2 578.4L662.5 578.9L661.5 580.5L661.9 582.9L661.5 585.4L662.7 586.6L664.3 586.2L664.3 588.6L661.7 587.2L659.2 585L655.5 584.2L653.7 584.4L652.9 583.6M652.9 583.6L649.4 584.2L648.7 580.9L648.7 576.6L644.2 576L643.2 578L640.5 578.2L638.5 573.9L631.5 573.8L630.1 574.1M652.9 583.6L652.9 587.8L649 587.8L649 594.2L651.8 597M629.2 596.4L633.4 596.6L642.2 596.6L647.9 597.8L651.8 597L655.5 597.4M655.5 597.4L651 597.8L647.1 598.4L647.1 606L645.1 606L645.1 611.9M645.1 611.9L645.1 619.6L638.3 620.1M645.1 611.9L646.5 616.2L649 615.1L651 612.9L655.9 613.6L658.6 609.6L663.5 606.4M663.5 606.4L659.8 602.9L655.5 597.4M655.5 597.4L658.8 597.7L662.5 593.6L665.4 593M663.5 606.4L667.2 606.8M667.2 606.8L669.5 604.5L670.5 601.5L670.1 597.8L670.5 595.2L665.4 593M667.2 606.8L668.5 611.2L668.4 614.2L670.3 616.4M666.6 614.4L668.5 614.4L668.5 617.2L666.6 617L666.6 614.4M660.8 620.5L663.3 621L663.3 623.2L661.1 624.5L658.8 622.7L660.8 620.5M665.4 593L665 591.4L670.9 589.8M670.9 589.8L670.5 585.8L671.1 582.9L670.3 580.7M670.3 580.7L667 579.1M670.3 580.7L672.4 580.9M670.9 589.8L673.4 590.8L673 593.8L675 596L676 593.8L676 590.8L674.2 588.8M674.2 584.8L677.3 585.2L681.2 584.4L684.9 582.9M627.8 420.5L629.2 418.2L630.5 415.9L629.9 413.1L630.1 409.9L629.7 404.9L633.4 398.4L634.4 393.8L636.4 390L638.1 384.1L641.2 379L646.2 376M646.2 376L648.1 374.7L651 377.9L654.9 378.4L656.9 372.5L660.8 370.8L663.3 373.6L662.5 376M646.2 376L649 379L652.2 382.1L652.2 386.6L652.9 390L653.3 392.4M612.8 446.6L614.5 446.6L615.9 446.4L617.7 447.5L617.3 448.4L617.9 448.6M617.5 452.2L617.5 450.6L618 450.6M624.9 458L624.7 459.3L626.6 459.9M619.9 462.7L621.6 462.5L622.7 461.6L623.7 462.8L624.3 461.3L625.8 461.6L626.6 459.9M626.6 459.9L627.6 460.2L629.7 459.6L630.3 460.4L632.9 461M632.9 461L632.5 462.4L633 463.4M632.9 461L635.4 460.7L637.5 460M637.5 460L638.3 458.2L639.5 456.7M633.1 454.4L635.4 453.8L639.1 455L639.5 456.7M635.4 447.8L637.9 449L639.1 449.7L640.9 450.9L642.8 452.4M642.8 452.4L641.2 454.1L639.3 455M642.8 452.4L645.1 452.9L648.1 452.6L650.2 453.5M639.5 456.7L642.8 457.3L646.1 455.6L649.2 455.6M650.2 453.5L649.2 455.6M650.2 453.5L650.4 452.1L652.9 449L652.2 446.3M652.2 446.3L652.2 442.8L652 438.5M652 438.5L650.6 437M652 438.5L655.9 437.7L656.5 435.3L658 432.8M658 432.8L654.9 430.6L649 430.2L647.2 431.3M658 432.8L661.1 430.9M653.6 424.9L655.9 424.5L659.6 426.1M652.2 446.3L654.9 445L659.8 446.3L665.6 446.9L668.2 444.4M649.2 455.6L650.8 456.7M650.8 456.7L648.1 460.4L645.7 462M650.8 456.7L654.7 457.6L658 456M658 456L660.8 455.9L663.1 457L664.6 461.3L661.1 463.9M658 456L660.9 460.2L661.1 463.9M661.1 463.9L664.1 464.6M650.4 467.3L652.9 468.6L655.9 468.8L658.8 467.6L661.9 468.6M645.7 462L647.9 465.6L650 466L650.4 467.3M645.7 462L643 462.7L640.3 462.5L638.1 461L637.5 460M632.7 463.9L636 463.9L636.8 462.7L638.1 461M637 464.6L637 466L638.5 468.1L640.5 470.5L642 471.7M637 464.6L639.3 464.6L643.2 465.4M643.2 465.4L644 467.6L643.6 469.2L642.6 470L642.2 471.7M643 462.7L643.2 465.4M650.4 467.3L649.8 469.2L651 470.5L649.8 472.3M649.8 472.3L648.1 472.5L646.3 473.4M644 473.4L644.8 471.8L645.3 471.6L646.3 473.4M643.6 469.2L645.3 471.6M646.3 473.4L646.1 474.9L647.1 476.1M645.1 479L646.5 477.5L647.1 476.1M647.1 476.1L650.8 474.8L653.9 474.4L656.9 474.9L657.4 473.9M656.9 476.5L658 474.9L657.4 473.9M657.4 473.9L658.8 472.9L660.8 473.1M649.8 472.3L650.8 474.8M687.1 474.4L689.2 474.3L691 475.4L691.4 477.7L693.5 479L691.9 479.7L692.7 482.2L693.5 485.1L692.3 485.6L688.8 485.4M688.8 485.4L684.1 486.1L680.2 486.1L677.7 487.3L676.2 488.3M696.8 473.6L696.2 475.2L693.9 475.1M691 475.4L693.9 475.1M693.9 475.1L695.1 476.7L696.8 479.5L696.8 481M693.5 479L696.8 481L699.8 479.2L701.5 482.2M688.8 485.4L686.5 488L686.1 491.8L681.8 494.2M681.8 494.2L677.9 496.6L675.8 495.7M676.2 491.3L677.1 491.6L677.5 492.3L676 494.3L674.6 494.8M675.8 495.7L675.5 498.5L674.4 502.9M676 494.3L675.8 495.7M681.8 494.2L682.6 496.9M682.6 496.9L678.3 498.5L680.2 500.7L679.3 501.8L676.4 503.6L674.4 503.2M682.6 496.9L684.9 497.6L688 499.4L693.3 503.6L696.8 503.8L698.8 504L699.2 505.1L700.5 505.1M696.8 503.8L698 501.8L699.8 502M693.5 485.1L694.7 488L695.9 489.9L694.7 492.7L695.9 495L699.4 497.8L699.2 499.6L700.9 501.8M689.4 530.4L690.4 528.4L692.9 528.4L696.8 528.8L698.8 529.2L700.1 526.8L701.9 526L707.5 525.2M707.5 525.2L713.4 523.1L714.8 519L713.8 517.5M713.8 517.5L708.7 517.1L706.8 514.4M713.8 517.5L715 514.8L715.4 512.9L716.1 512.7M707.5 525.2L709.7 530M705.2 513.1L706 513.5L706.8 513.5M711.3 484.8L713 484.4L715.4 482.9L717.9 482.7L720.2 484.2L722 484.4L723.9 486.6L725.4 486.6L725.5 489M725.5 489L724.3 492L724.1 493.4L724.9 498.5L726.7 499.6L724.9 502.2M724.9 502.2L726.7 504.9L728.6 505.8L728.6 508L729.6 509.3L727 509.9L726.3 512.3M708.3 473.8L711.4 472.3L714.4 474.9L715.4 474.9M715.4 474.9L715.4 465.1L720.2 463.8L725.1 467L727 469.2L732.7 468.6L735 470.5L734.8 473.1L738.6 475.3L740.7 474.9L744.4 472.5M715.4 474.9L717.5 474.9L720.4 471.3L723.1 472.6L723.3 474.9L726.9 475.4L727.8 478.2L731.5 481L735.8 484.7M725.5 489L727.6 489.9L729.2 488.5L731.9 487.3L734.1 484.9L735.8 484.7L738.4 485.1M738.4 485.1L738.8 482.7L739.5 481L738.2 479.2L739.7 479.4L741.3 477.7L743.6 477.7L743.4 475.7M738.4 485.1L741.3 485.4L743 483.4L745.2 482.5L745.8 486.3L749.1 484.5L752.2 485M752.2 485L750.4 482L750.1 479.5M750.1 479.5L746.2 480L743.6 479.2L741.3 477.7M750.1 479.5L752.4 477.1L755.9 475.8L759 474.7L762.5 472.6M744.4 472.5L746.2 471L749.5 471.8L751.4 470L754.3 470.8L760.2 471L762.5 472.6M744.4 472.5L744.6 475.2L748.5 476.2L746 477.9L743.4 475.7M762.5 472.6L762.5 470.5L763.7 470L762.9 466L762 465.4L767 464.6L766.6 463.5L768 459L772.9 459.3L773.3 455.6L775.4 453.5L776.4 453.5M724.9 502.2L728 503.2L730.9 503.2L735.4 502L736.2 499.1L741.3 497.6L741.7 495L743.2 494.3L742.6 492.7L744.8 492.5L745.8 489.9L745.8 486.8L750.4 486L752.2 485M739.1 515.4L744.6 514L741.9 508L743.4 506.2L746.5 506.2L750.3 501.8L751.6 499.4L751.4 495.5M751.4 495.5L750.3 492.7L750.4 491.1L756.3 490.4L757.9 489.2M752.2 485L754.3 488L757.9 489.2M757.9 489.2L760.2 492L759.6 496L760.2 498.9L764.1 501.4M764.1 501.4L766 501.2L769.9 504L773.8 506.2L777.9 506.5M764.1 501.4L762.2 504.4L764.5 505.4L768.6 507.5L771.9 508.9L773.8 509.3L777.9 509.7L777.9 506.5M777.9 506.5L779.5 507.8L779.7 508.7L785.5 508.7L785.7 507.3L784.8 506.7L781.6 505.6L779.5 507.8M784.8 506.7L785.7 507.3L789.4 504L792.4 503.6L793.7 503.2L795.9 505.8M779.7 519.6L779.5 516.5L777.9 513.8L777.9 511L778.5 509.5L781.3 510.6L781.3 512.3L786.3 512.7L785.5 514.2L784 515.4L784.8 516.9L786.1 515.4L786.7 520.5L786.1 521.7M786.7 520.5L788.1 518.6L787.9 514.8L790.6 511.8L791.8 509.3L795.3 506.9L795.9 505.8M795.9 505.8L798.6 507.1L798.6 511L796.5 514.2L799 516.5L799.6 518.8L801.5 520L803.4 519.8M803.4 519.8L801.3 522.4M801.3 522.4L799.2 523.5L796.9 526.2L796.1 526.2L797.6 529.2L798.4 531L797.6 532.8L799.6 536.2L799.6 539.2L800.4 540L798.7 542.3M801.3 522.4L802.3 524.2L803.5 524.2L803.1 527.8L805.2 526.8L807.4 526.6L808.9 526.6L810.5 528.4L810.5 530.4L811.9 531.8L811.9 534.4L811.3 534.6M811.3 534.6L807 534.6L805.8 536L806.8 539.8M811.3 534.6L812.8 535.4L815.8 534.2M815.8 534.2L815.8 531.2L814 530L811.9 527.6L810.9 525.8L808.8 524.4L810.5 522.5L807.4 521.5L806.8 519.8L805.3 518.2M805.3 518.2L804.5 520.7L803.4 519.8M815.8 534.2L815.8 538.4L813.6 539.8L812.7 541.2L811.1 541.4L809.8 542.3M805.3 518.2L808.2 517.3L811.5 516.3L814.2 517.3L814 519L816.8 519.9M801.4 550L803.1 551.3L804.7 551.3L805.2 550.5M848.7 478.2L851.8 475.7L853.6 473.6L855.9 474.7L857.5 473.1L859.6 470.5L860.8 472.1M853 483.8L854.2 482.5L856.5 481.7M777.4 453.2L778.7 456.2L782.6 458.2L783.6 464.6L788.5 465.4L792.2 467.3L793.9 471.2L801.1 471.6L804.7 471.8L810.7 474L814.8 472.3L819.5 471.9L824.2 468.6L824.4 465.1L827.7 465.7L832.2 463.2L832.7 461.6L835.1 460.9L839.8 460.4L839.6 459L837.2 457L835.9 456.7L831.4 457L832 455.3L833.7 451.5M819.9 558.6L821.6 560.8L824.9 559.6L827.9 560L829.6 559.6L830.6 556.9L831.8 554.2L835.5 554.4M828.6 553.6L830 554.6L831 553M881.1 567.5L881.1 575.8L880.9 575.8L881.1 580.1M848.1 580.7L849.9 580.5L850.3 579.3M672.8 498.9L674.2 502.9"/>
<path fill="#b3efe9" stroke="#9adfd8" stroke-width="0.7" d="M666.2 371.9L668.5 371.4L671.5 374.1L676.4 376.3L681.2 380L684.1 382.6L686.5 386.6L686.7 389.5L684.1 391L681.2 391.2L676.4 390L672.4 388.1L669.9 386.1L671.5 390L674 393.8L673.8 398.4L676.4 400.6L680.2 401L679.3 398.4L677.9 395.4L681.2 396.8L684.1 397.9L684.7 393.8L687.1 391L689 389.1L692.3 391.4L692.5 387.1L691.6 382.6L690.6 378.4L693.9 379L696.4 381.1L695.9 385.6L696.8 387.1L699.8 383.6L703.6 381.1L709.5 378.4L711.4 380.5L714.4 379L718.3 377.9L722.2 379.5L724.1 376.3L723.7 372.5L727 372.5L731.9 374.7L735.8 379L739.3 380L740.7 376.8L737.8 373L736.4 368L737.4 362L739.7 355.8L741.7 352.5L745.6 351.2L748.1 354.5L748.3 363.2L747.1 370.8L748.1 376.3L749.9 381.6L746.9 387.6L749.7 387.1L751.6 380.5L750.4 376.8L754.3 378.4L757.3 383.6L759.2 382.1L756.3 376.8L752.4 375.2L750.4 371.4L750.3 363.8L752.2 357.1L754.3 359L757.9 356.4L759.2 357.1L762.1 358.3L765.1 360.8L768 365.6L768.6 369.1L769.9 368L769 362L766.6 357.1L763.3 349.2L769.9 347.1L774.8 345.7L775.8 338.5L783.6 334L791.4 330L799.2 326.8L805 319.1L809.5 316.4L812.8 320L815.8 325.9L823.6 325.1L827.5 330.8L827.5 336.3L822.6 342.2L816.8 349.9L813.8 352.5L818.7 351.2L824.5 348.5L828.4 348.5L837.2 349.2L838.2 352.5L846 348.5L847.9 347.8L852.8 346.4L858.7 353.2L857.7 360.8L860.6 365.6L863.5 362L866.5 362.6L871.3 361.4L875.2 362L878.2 357.1L880.1 353.9L885 354.5L890.8 356.4L897.7 357.7L899.6 362L903.5 365.6L910.3 364.4L916.2 366.2L919.1 373L922 372.5L926.9 373L932.8 372.5L934.7 370.8L938.6 370.2L943.5 371.9L949.3 371.9L954.2 374.1L957.1 376.4L962 380L967.9 386.1L969.4 387.1L969.4 391L969.4 393.3L969.4 398.4L969.4 399.2L965.9 397L962 394.7L959.1 391.4L955.2 393.8L954.2 397.5L952.3 397.5L954.2 402.8L955.8 407L951.3 407.4L946.4 409.9L942.5 413.1L938.6 417L933.8 415.1L930.8 417L927.5 417.8L924.6 420.1L924 423.8L924.4 425.6L923.4 428.1L924.6 430.9L922 432.3L921.7 435L918.7 437.7L918.1 441.2L915.4 441.9L914.2 445.4L911.7 448.1L910.3 444.7L909.6 438.3L909.6 433.3L911.3 428.1L913.3 425.2L915.2 423.1L918.1 418.6L921.7 415.1L924.8 410.7L926 407.4L923.6 410.3L919.1 414.3L918.1 410.3L915.2 409.9L911.7 411.1L908.4 416.3L907.4 417.8L908 419.7L903.5 421.2L900.6 420.5L900.2 418.9L896.7 418.6L890.8 419.7L885 419.7L881.1 422.3L878.2 426.3L875.2 429.9L871.3 435L870 436L873.3 438.7L876.2 439L878.2 437.7L881.7 440.9L881.5 443.8L880.3 447.8L880.1 450.9L879.9 455.3L876.2 461L872.3 465.7L869.4 469.2L865.5 471L863.4 470.2L861 472.1L862 469.2L861.6 465.4L863.4 464.3L865.7 464.9L868.8 457.6L869.4 455.6L864.5 457.6L861.6 457.6L859.6 454.1L858.7 452.6L854.8 451.5L854.8 450.3L851.1 441.4L847 440L841.7 440.6L840.1 442.2L841.5 443.2L840.1 446L838.6 450L836.1 452.4L833.7 451.5L829.4 450.3L825.5 452.4L821.6 453.2L816.8 452.6L814.2 450L811.7 449.7L808 450.3L805.6 449L805.4 446.9L799 444.4L796.9 447.8L797.8 449.4L795.9 451.5L791.4 450.9L790.4 450.9L786.1 448.4L781.6 450.9L779.5 452.4L777.4 453.2L776.4 453.5L772.3 452.1L769 448.1L762.1 448.4L758.1 440.6L755.9 437L750.4 439.6L749.5 438.3L745 437.7L744.2 434L740.7 434L739.1 435L732.9 437L729 437.7L725.1 438.3L725.5 441.6L723.5 444.7L726.1 448.4L722.2 449L720.4 447.8L714.8 449L712.4 447.8L708.5 446.3L705.2 445.7L701.1 451.2L698.6 450L696.8 455.6L697.8 456.7L700.7 458.2L702.1 461.3L699.8 462.9L698.8 463.5L697.4 466L698.8 467.8L698.8 470.5L700.9 473.4L699.4 475.2L696.8 473.6L694.9 471.8L691.9 471.6L689 470L684.1 469.4L682.2 467.8L679.9 466L678.9 465.4L677.5 464.6L678.1 463.9L679.5 463.5L680.2 462.4L680.1 461L680.8 460.4L682.8 459.5L682 459L680.6 459.3L683.8 457L684.1 455.9L683.8 452.1L680.2 451.2L679.3 450L675.4 449.7L673 446.9L671.5 443.8L668.2 444.4L667.6 441.2L669.5 440.6L667.2 438.3L666.2 436.7L666.6 435L664.6 432.3L661.1 430.9L660.2 426.3L659.8 425.2L659.6 421.6L660.8 418.9L662.7 417.4L665 417.4L662.7 416.3L661.9 415.1L660.4 415.1L662.7 412.3L667.6 405.3L665.6 399.7L664.1 397L664.8 392.9L662.7 387.1L664.6 383.1L661.7 379L662.5 376L664.6 373.6ZM255.1 376.4L260 380L265.9 386.1L271.7 387.1L275.2 391L273.7 393.3L270.4 398.4L268.8 399.2L263.9 397L260 394.7L257.1 391.4L255.1 392.9ZM644.4 436.8L645 435.2L647.1 434L650.4 435.3L650.6 437ZM883.6 437.3L885.4 441.6L885.6 446.3L886.6 450.9L888.3 454.7L885 453.2L884.6 456.7L885.8 461L886 462.1L884.4 460.4L883.2 462.7L883 458.2L883.2 453.8L883.2 449.4L882.7 445.4L882.5 440.6ZM706.8 362.6L707.5 359L709.1 353.2L711.1 348.5L713.8 342.9L716.3 337L721.2 331.6L727 328.4L732.9 324.3L739.9 322.6L740.5 325.9L734.8 332.4L727 338.5L723.1 344.3L719.6 350.5L717.3 357.1L718.3 363.8L717.3 367.4L713.4 366.8L710.5 365.6ZM784.6 293.4L788.5 279.2L794.3 279.2L801.1 290L808.9 300.9L810.9 309.9L803.1 313.7L800.2 306L795.3 307L791.4 303L786.5 298.8ZM873.3 337L876.2 329.2L881.1 330L886 332.4L889.9 334.7L887 338.5L881.1 339.3L877.2 340.7ZM891.8 335.5L896.7 336.3L900.2 338.5L896.7 340L892.8 338.5ZM879.1 346.4L883 346.4L886 350.5L881.1 350.5ZM954.4 362L959.1 361.7L962 363.8L959.1 365.9L955.2 365.6ZM693.9 286.5L699.8 282.9L705.6 284.1L703.6 291.1L697.8 292.3ZM709.5 288.9L717.3 282.9L723.1 281.7L729 285.3L725.1 292.3L715.4 293.4ZM713.4 275.4L719.2 271.4L721.2 276.7L715.4 279.2ZM700.3 374.7L702.7 373.6L704 376.3L701.7 377.9ZM720.2 369.1L723.1 368L723.5 371.9L721.2 372.5ZM889.9 468.4L891.8 466.5L892.8 466.8L890.8 468.6ZM893.2 465.7L896.3 463.8L896.7 464.3L894 466ZM898.3 462.4L899.8 461.6L899.4 462.7ZM902.5 459.6L904.5 457.3L905.1 457.9L903.1 459.9ZM907.8 452.4L910.3 449L910.7 450L908.4 452.9ZM929.3 434L930.4 434.7L931 436L929.8 435.7ZM925 420.5L927.1 421.9L926 423.1L924.8 421.9ZM755.3 298.8L757.3 297.7L756.3 300.9ZM255.1 361.9L257.1 361.7L260 363.8L257.1 365.9L255.1 365.8ZM957.1 376.4L957.1 392.9M595 450.7L597.4 448.1L598 447.2L600.3 447.2L600.9 446.3L599.9 446.6L598 446.1L595.8 445.4L598.2 443.5L597 442.2L597.8 440.9L597.2 440.4L600.1 440.6L600.3 439L600.3 438L599.1 436.7L600.3 435.2L596.7 436.2L596.2 435L597 433.3L596.6 431.9L595 434L595.2 431.6L594.1 429.2L595 426.7L594.8 424.9L596.4 422.3L600.3 422.1L598.4 424.9L598.4 426L602.2 425.6L602.6 426.5L602.1 427.8L601.3 430.2L600.7 430.4L599.9 431.6L602.2 432.3L603.2 435L605.2 436.7L606 438L606.3 439.6L606.7 441.6L607.1 441.7L608.7 441.9L609.6 443.2L608.7 445L607.9 446.3L608.9 446.8L608.8 447.5L607.9 448.1L606.5 448.6L604 448.6L602.2 449L601.3 449.2L599.5 449L599.1 450.3L598 449.8L596.3 450.9ZM591.9 434.8L594.1 434.2L595.2 436L595.4 437L594.4 438.2L593.3 438L591.9 437.8L590.4 436.8L591.5 435.8ZM591.7 428.1L592.5 425.2L594.1 422.9L593.9 424.5L592.5 427.8ZM593.3 426.7L594.1 425.6L594.8 427.4L594.1 427.8ZM599.7 420.8L600.7 420.1L600.9 421.2ZM603.2 416.3L604 414.3L604.2 416.3L603.6 417.4ZM593.9 430.2L595 429.9L594.6 430.6ZM593.7 432.3L594.4 432.3L594.1 433ZM597 437.7L597.6 437L597.6 438ZM619.8 440.3L622.3 439.3L622.9 438.7L623 435.3L625.5 435.7L625.8 437L627.4 438.3L629.7 437.7L632.3 436.3L633.8 438.7L634.2 440.6L633.6 442.2L634.8 444.4L634.8 446.3L635.4 447.8L634 447.8L631.5 449.4L629.9 450.1L630.5 451.8L633.1 454.4L632.3 455.1L631.1 456.3L631.5 457.9L629.9 457.7L627.6 458.5L626 458.7L624.9 458L622.9 457.6L621 457.9L621 455.9L622.1 453.8L619.2 453.2L618.6 452.4L618 450.6L617.9 448.6L617.9 446.6L618.2 445.2L619.4 444.9L619.9 443.5L620.2 440.9ZM602.6 469.4L603.6 466.5L604 463.5L603.6 461.8L601.9 459L600.3 457.9L597.6 457L596.8 455.6L599.3 454.4L602.2 454.9L603.2 454.7L602.6 451.8L603.8 452.6L606.5 452.4L609.1 450.6L609.3 448.1L611 447.5L611.2 448.4L612.2 448.4L614.3 451L615.6 450.4L615.7 451.5L617.5 452.2L618.6 452.4L619.2 453.2L622.1 453.8L621 455.9L621 457.9L619.8 458.3L618 461.6L619.4 461.1L619.9 462.7L619.1 464.9L619.8 466L619.6 466.8L621.2 467.4L620.8 468.4L619.6 469.4L617.9 470.2L616.5 469.7L614.7 469.4L613.4 469.4L612.2 470.8L612.4 472.1L610 472.1L607.5 471L605.2 471L603.4 470.4ZM624.5 470.5L624.8 472.9L624.1 474.7L622.9 473.4L622.9 471.8L623.7 471ZM602.6 469.4L598.7 469.3L594.8 468.9L590.5 468.5L588 470.5L588.8 472.9L588.8 473.4L590.2 472.9L593.3 473.4L594.1 474.2L592.7 475.7L592.7 477.7L592.5 479L591.5 479.2L592.5 481L591.9 482.2L592.5 482.7L591.5 484.2L591.7 485.1L593.7 485.9L593.9 486.8L595.2 488L595.7 487.7L597.6 486.3L599.3 486.3L601.9 486.2L603 485.1L604.8 484.2L605.2 482.5L606.5 481.3L605.6 479.5L607.9 476.5L608.5 475.4L610.4 474.7L612.4 473.4L612.4 472.1L610 472.1L607.5 471L605.2 471L603.4 470.4ZM610.8 479.2L612.2 478.5L612.8 479.2L612.1 480L611.2 479.6ZM608.5 481L609.1 480.5L609.3 481L608.9 481.2ZM613.6 478.2L614.5 478.2L614.3 478.6ZM573.2 505.5L574.6 505L574 506.1ZM575.3 506L576.1 506L575.9 506.8ZM578.1 506L579 504.7L579.1 505.8ZM884 583.2L886 589.8L887.9 590.2L889.5 591.8L889.7 594.8L890.8 597.8L891.4 599.6L894.2 601.3L896.7 602.9L898.1 606.6L900.2 607.7L900.2 609.1L902.2 610.2L904.7 612.9L904.7 615.5L905.5 618.8L905.7 620.3L904.5 624.3L903.5 628.1L902 630L901 632.3L900 635.1L898.6 638.4L898.6 640.6L895.3 641.4L892.8 643L891.6 644.5L889.7 642.8L888.7 641.6L887.7 642.5L886 643.9L883 642.5L880.3 641.9L878.8 639.4L878.4 636.7L876.2 636L875.4 636.3L876.2 634.1L875.2 632.7L874.9 635.1L873.1 635.3L874.3 632.5L875.2 630.2L874.9 629L873.3 631.6L871.2 634.4L869.6 633.7L867.8 630L866.7 628.1L863.9 627.7L861.8 626.5L857.7 627L852 628.4L847.9 630L847 632L843.9 632L840 632.3L836.2 634.7L833.5 634.6L830.6 633.1L830.4 631.1L831.8 630.7L831.8 627.7L830.4 624.3L829.6 620.5L827.9 615.7L826.8 614.8L828.3 614.2L827.3 611.2L827.9 609.1L828.1 607L828.7 605.6L829.2 606.8L831.4 605L833.7 603.1L836.1 602.9L838.2 601.9L842.1 601L844.4 598.2L844.4 595.8L845.8 594.6L847.2 596.4L847.8 594.6L849.7 592.4L851.7 590.4L853.6 589.4L855.9 591.4L856.3 591.8L858.7 591.6L859.1 589L860.2 587.8L861.2 586.6L863.5 586.2L864.7 584.6L866.5 585.4L869.4 586.2L872.7 586.2L871.3 588.4L871.2 591.6L870.2 591.8L872.7 593.6L874.9 594.4L877.2 595.8L877.8 596.6L880.7 596.8L881.9 593.8L882.3 589.8L882.3 587L883.2 583.8ZM888.3 648.5L891.8 649.6L895.3 649.1L895.3 652.4L894.6 655L892.4 656.1L890.8 655.8L889.3 652.7ZM860.2 584.6L862.4 584.4L862.2 585.4L860.4 585.4ZM872.1 589.4L873.1 589.4L872.9 590.4L872.1 590.2ZM872.5 636.4L874.5 636L875.4 636.6L874.1 637.1ZM904.5 611.9L905.1 612.3L904.9 614L904.5 613.4ZM886.6 646L887.1 646L887.1 647L886.8 647ZM894.4 646.3L895.3 646.5L895.1 647.5L894.6 647.3ZM843.3 512.1L844 512.7L843.3 514.8L842.9 516.7L841.8 519.2L841.3 518.4L840.3 516.9L840.5 515.2L841.7 513.3L842.1 512.6Z"/>
<path fill="#5fe1d4" stroke="#56d2c5" stroke-width="0.7" d="M377.8 496.2L377.4 494.6L375.3 493.2L373.7 492.3L371 491.3L370.2 488.7L368.4 486.6L367.3 484.2L366.3 482.5L364.7 479.5L363.8 477.2L364.2 473.6L363.4 471L364.2 466.5L364.4 461.8L363.2 455.9L366.3 456.2L367.5 458.5L367.1 454.4L366.1 453.8L420.6 453.8L421.7 454.7L425.8 455.3L428.7 456.4L431.4 456.7L433.8 455.9L437.5 457.9L441.4 461L443.3 462.9L445.7 466.5L445.3 470.5L444.1 472.9L445.3 473.9L450.1 472.1L452.1 471L452.1 469.7L456.4 468.9L457.4 467.3L460.5 465.1L466.7 465.1L469.1 462.7L469.6 460.4L471.2 458.3L473.9 459.3L473.9 463.2L475.5 465.4L472.6 467L469.6 468.6L468.3 471.3L469.6 473.6L467.1 474.4L462.8 475.9L461.9 477L461.5 479.2L459.9 481L458.9 483.2L457.9 485.6L458.5 489L457 491.1L454.2 493L451.7 494.6L448.6 497.1L447.4 500L447.6 502.3L449 505.6L450 508.8L449.6 512.1L448 512.3L446.6 509.9L444.9 506.9L444.9 504L442.9 502L440.6 502.5L437.9 500.9L434.5 501.2L432 501.2L432 503.6L429.7 503.6L426.8 502.7L423.2 502.5L420.9 503.6L418 505.6L416.4 507.8L416.6 510.7L412.9 509.7L412.1 507.3L410.6 505.6L408.4 502.3L406.5 502.3L405.1 504L403.4 503.4L401.6 500.5L398.5 497.8L395.2 497.8L395.2 498.9L389.7 498.9L382.3 496.2L382.5 495.7ZM331.2 372.8L326.3 370.2L321.4 369.7L316.6 368.5L312.7 368L308.8 365.9L304.9 365.3L300.8 362.9L297.1 366.2L293.2 368.5L289.3 371.4L287.9 374.7L285.4 376.8L282.1 377.1L281.5 379.8L284.4 381.6L286.7 385.1L288.3 386.6L290.6 386.6L292.2 389.5L289.3 391.2L286.7 388.8L283.4 389.8L280.5 391.9L278.4 393.3L281.5 395.2L282.1 397.9L285.4 398.6L289.3 398.6L292.2 397L292.6 400.6L291.2 402.8L288.3 404.5L285.4 404.9L283.8 407L282.4 410.7L283.4 413.5L286.3 417.4L289.7 417.4L290.2 420.1L290.6 422.1L294.1 421.6L296.7 421.9L299 421.9L299.4 425.2L297.1 428.5L293.2 431.6L290.2 433.3L287.3 435L284.6 436.3L288.3 436L291.2 434.7L294.1 433.3L297.1 431.9L300 429.5L302.9 426.3L305.5 423.8L306.8 420.8L308.8 418.6L310.1 414.3L312.7 412.3L313.6 413.5L310.7 417L310.1 420.1L313.6 418.9L316.6 417L317.6 413.9L320.5 413.5L322.4 415.5L325.3 417L329.2 417.2L332.2 418.2L336.1 420.8L339 423.1L340.9 425.6L342.3 428.8L344.8 431.6L346.8 434.3L349.1 435.7L352.3 435L352.6 431.6L349.1 429.5L346 423.1L341.9 418.2L338 421.2L334.9 416.6L331.2 415.9ZM305.1 426L308 423.8L309.6 426L306.8 428.5ZM271.5 402.8L275 403.2L277 404L273.7 404.9L271.1 404ZM279.9 416.3L282.8 415.9L282.8 417.8L280.5 417.8ZM276.8 440.9L278.9 439.6L281.9 438.3L281.7 439.6L278.2 441.6ZM266.3 443.8L269.6 443.5L269.6 444.4L266.5 444.7ZM259.6 445L262.6 444.7L262.6 445.7L259.8 446ZM284.8 435.3L287.7 435L287.9 436.3L285 437ZM301.9 522.7L303.5 523.2L304.2 524.2L302.7 525.3L301.9 524.4ZM300.6 521.1L301.9 521.3L301.8 521.9L300.8 521.7ZM297.5 519.8L298.6 520L298.5 520.6L297.9 520.5ZM294.5 518.6L295.5 518.6L295.4 519.2L294.6 519.1ZM461.9 476.7L465.8 475.4L464.8 476.2Z"/>
<path fill="#2eb8a7" stroke="#2aa596" stroke-width="0.7" d="M879.3 474.4L879 471.8L880.1 469.7L881.7 469.7L882.5 466.5L882.9 463.8L885 466.2L887.5 467.8L889.5 467L890.1 469.4L887.9 470.6L885.6 473.1L883 471.6L881.1 472.1L879.9 472.1L881.3 473.6L880.3 474.4ZM880.9 474.4L882.1 477L883 479.2L882.3 482.5L881.1 483.7L881.1 485.9L880.3 487.5L880.9 488.7L879.7 490.2L878.9 490.6L878.8 489.2L877.6 489.9L876.9 491.3L876.2 490.4L875.6 491.3L873.3 491.3L873.1 492L871.9 493L871 494L869.6 493L869.7 492L870.2 491.2L868.8 491L867.5 491.3L866.5 491.8L864.3 491.9L863.5 493L861.6 492.7L861.4 491.9L862.4 491.7L863.7 490.6L864.9 489.4L866.1 489.1L867.8 489.1L869.8 488.6L871.2 489L871.5 487.5L872.5 486.6L872.7 484.9L874 484.4L873.3 485.4L873.5 486.1L875.6 485.3L877.2 483.3L878.2 482L878.9 481L879.1 478.6L879 476.7L879.7 475.3L880.5 475.9L881.5 475.2ZM863.7 494.1L865.1 492.7L866.7 492.3L868.6 492.3L868.8 493.2L867.8 494.3L866.7 493.9L865.5 495.6L864.5 495ZM861.4 493L863 493.7L863.4 494.6L863.4 495.7L862.4 498.7L861 499.6L860 498.9L860.2 497.1L860.8 495.5L859.3 495.7L859.1 494.3L860.2 493.7ZM855 510.3L856.3 508.7L856.5 509.1L855.6 510.3ZM858.1 505.6L859.1 505.1L858.7 506ZM875.7 483.2L876.2 482.5L876.3 483.6ZM861.2 500.3L861.8 500.5L861.4 501.2ZM858.1 492.3L858.7 491.1L858.5 492.3Z"/>
<path fill="#fff" stroke="#dadada" stroke-width="0.7" d="M426.8 460.4L429.7 458.5L432.6 456.7L434 454.4L437.9 454.7L440.8 457L441.2 460.7L438.4 460.7L435.5 460.7L434.2 458.7L431.6 460.2L429.1 460.2ZM434.9 473.9L436.7 473.9L438.1 470.5L437.9 466.5L439.6 464.6L440.4 462.7L437.9 462.9L435.3 465.1L434.7 469.2ZM441.4 462.4L443.7 461.8L447.2 462.4L450.1 463.8L450.1 466.2L447.6 466.5L446.8 469.4L445.5 470.5L445.1 468.1L442.7 468.4L443.7 465.1L442 463.2ZM443.5 473.6L445.3 474.7L449.2 473.1L452.3 471L451.1 470.8L447.8 471.3L444.9 472.9ZM450.5 469.7L454 469.7L457.6 468.9L457.2 467.3L454.8 467.8L451.7 468.4ZM697.4 466L698.8 463.5L699.8 462.9L702.1 461.3L705.6 459.9L709.5 461L709.9 464.3L706.2 464.6L704.2 466.8L706 468.8L708.3 471L709.5 474.4L709.3 478.2L710.5 480L711.3 484.8L711.4 485.9L707.5 486.6L705.6 486.2L703.6 484.7L701.5 482.2L702.5 479.7L702.7 477.2L704.2 477.2L702.1 474.4L700.9 473.4L698.8 470.5L698.8 467.8Z"/>
</g>
<rect x="148.3" y="667" width="274.2" height="13.2" fill="url(#lg)"/>
<path d="M239.7 667v13.2M331.1 667v13.2" stroke="#fff" stroke-opacity=".35" stroke-width="0.8"/>
<text x="133" y="678" font-family="Liberation Sans,Arial,sans-serif" font-size="14" fill="#111">0</text>
<text x="429.5" y="678" font-family="Liberation Sans,Arial,sans-serif" font-size="14" fill="#111">258</text>
</svg></div>

<h2 style="top:744px;font-size:21.4px">Top 10 Countries</h2>
<div class="tbl"><div class="row" style="height:51px"><svg class="fl" style="top:12.3px" width="40" height="27" viewBox="0 0 40 27"><circle cx="20" cy="13.5" r="8.1" fill="#b3142f"/></svg><div class="c1" style="top:13.5px">Japan</div><div class="c2" style="top:13.5px">Asia</div><div class="c3" style="top:13.5px">258</div><div class="ln"></div></div>
<div class="row" style="height:49px"><svg class="fl" style="top:14.3px" width="40" height="21" viewBox="0 0 40 21"><rect y="0.00" width="40" height="1.49" fill="#b22234"/><rect y="3.23" width="40" height="1.49" fill="#b22234"/><rect y="6.46" width="40" height="1.49" fill="#b22234"/><rect y="9.69" width="40" height="1.49" fill="#b22234"/><rect y="12.92" width="40" height="1.49" fill="#b22234"/><rect y="16.15" width="40" height="1.49" fill="#b22234"/><rect y="19.38" width="40" height="1.49" fill="#b22234"/><rect width="16" height="11.31" fill="#3c3b6e"/><path d="M0.90 0.65h.9M3.56 0.65h.9M6.22 0.65h.9M8.88 0.65h.9M11.54 0.65h.9M14.20 0.65h.9M2.23 1.90h.9M4.89 1.90h.9M7.55 1.90h.9M10.21 1.90h.9M12.87 1.90h.9M0.90 3.15h.9M3.56 3.15h.9M6.22 3.15h.9M8.88 3.15h.9M11.54 3.15h.9M14.20 3.15h.9M2.23 4.40h.9M4.89 4.40h.9M7.55 4.40h.9M10.21 4.40h.9M12.87 4.40h.9M0.90 5.65h.9M3.56 5.65h.9M6.22 5.65h.9M8.88 5.65h.9M11.54 5.65h.9M14.20 5.65h.9M2.23 6.90h.9M4.89 6.90h.9M7.55 6.90h.9M10.21 6.90h.9M12.87 6.90h.9M0.90 8.15h.9M3.56 8.15h.9M6.22 8.15h.9M8.88 8.15h.9M11.54 8.15h.9M14.20 8.15h.9M2.23 9.40h.9M4.89 9.40h.9M7.55 9.40h.9M10.21 9.40h.9M12.87 9.40h.9M0.90 10.65h.9M3.56 10.65h.9M6.22 10.65h.9M8.88 10.65h.9M11.54 10.65h.9M14.20 10.65h.9" stroke="#fff" stroke-width=".75" stroke-opacity=".8"/></svg><div class="c1" style="top:13.5px">United States | <a>view</a></div><div class="c2" style="top:13.5px">North America</div><div class="c3" style="top:13.5px">134</div><div class="ln"></div></div>
<div class="row" style="height:49px"><svg class="fl" style="top:14.8px" width="40" height="20" viewBox="0 0 40 20"><g transform="scale(0.6667 0.6667)"><clipPath id="cj40"><rect width="60" height="30"/></clipPath><g clip-path="url(#cj40)"><rect width="60" height="30" fill="#0b1f66"/><path d="M0 0L60 30M60 0L0 30" stroke="#fff" stroke-width="6"/><path d="M0 0L60 30M60 0L0 30" stroke="#c8102e" stroke-width="2.2"/><path d="M30 0v30M0 15h60" stroke="#fff" stroke-width="10"/><path d="M30 0v30M0 15h60" stroke="#c8102e" stroke-width="6"/></g></g></svg><div class="c1" style="top:13.5px">United Kingdom | <a>view</a></div><div class="c2" style="top:13.5px">Europe</div><div class="c3" style="top:13.5px">6</div><div class="ln"></div></div>
<div class="row" style="height:51px"><svg class="fl" style="top:12.3px" width="40" height="27" viewBox="0 0 40 27"><rect width="40" height="27" fill="#fa1e1c"/><rect width="20" height="13.5" fill="#0b1c91"/><path d="M10 2.600L10.9 5.300H9.100Z" fill="#fff" transform="rotate(0 10 6.750)"/><path d="M10 2.600L10.9 5.300H9.100Z" fill="#fff" transform="rotate(30 10 6.750)"/><path d="M10 2.600L10.9 5.300H9.100Z" fill="#fff" transform="rotate(60 10 6.750)"/><path d="M10 2.600L10.9 5.300H9.100Z" fill="#fff" transform="rotate(90 10 6.750)"/><path d="M10 2.600L10.9 5.300H9.100Z" fill="#fff" transform="rotate(120 10 6.750)"/><path d="M10 2.600L10.9 5.300H9.100Z" fill="#fff" transform="rotate(150 10 6.750)"/><path d="M10 2.600L10.9 5.300H9.100Z" fill="#fff" transform="rotate(180 10 6.750)"/><path d="M10 2.600L10.9 5.300H9.100Z" fill="#fff" transform="rotate(210 10 6.750)"/><path d="M10 2.600L10.9 5.300H9.100Z" fill="#fff" transform="rotate(240 10 6.750)"/><path d="M10 2.600L10.9 5.300H9.100Z" fill="#fff" transform="rotate(270 10 6.750)"/><path d="M10 2.600L10.9 5.300H9.100Z" fill="#fff" transform="rotate(300 10 6.750)"/><path d="M10 2.600L10.9 5.300H9.100Z" fill="#fff" transform="rotate(330 10 6.750)"/><circle cx="10" cy="6.750" r="2.5" fill="#fff" stroke="#0b1c91" stroke-width=".4"/></svg><div class="c1" style="top:13.5px">Taiwan</div><div class="c2" style="top:13.5px">Asia</div><div class="c3" style="top:13.5px">5</div><div class="ln"></div></div>
<div class="row" style="height:49px"><svg class="fl" style="top:14.8px" width="40" height="20" viewBox="0 0 40 20"><rect width="40" height="20" fill="#0b1f66"/><g><g transform="scale(0.3333 0.3333)"><clipPath id="cj20"><rect width="60" height="30"/></clipPath><g clip-path="url(#cj20)"><rect width="60" height="30" fill="#0b1f66"/><path d="M0 0L60 30M60 0L0 30" stroke="#fff" stroke-width="6"/><path d="M0 0L60 30M60 0L0 30" stroke="#c8102e" stroke-width="2.2"/><path d="M30 0v30M0 15h60" stroke="#fff" stroke-width="10"/><path d="M30 0v30M0 15h60" stroke="#c8102e" stroke-width="6"/></g></g></g><polygon points="10.00 13.00 10.45 14.37 11.80 13.87 11.01 15.07 12.24 15.81 10.81 15.95 11.00 17.37 10.00 16.34 9.00 17.37 9.19 15.95 7.76 15.81 8.99 15.07 8.20 13.87 9.55 14.37" fill="#fff"/><polygon points="30.00 15.60 30.23 16.31 30.94 16.05 30.53 16.68 31.17 17.07 30.42 17.14 30.52 17.88 30.00 17.34 29.48 17.88 29.58 17.14 28.83 17.07 29.47 16.68 29.06 16.05 29.77 16.31" fill="#fff"/><polygon points="30.00 2.20 30.23 2.91 30.94 2.65 30.53 3.28 31.17 3.67 30.42 3.74 30.52 4.48 30.00 3.94 29.48 4.48 29.58 3.74 28.83 3.67 29.47 3.28 29.06 2.65 29.77 2.91" fill="#fff"/><polygon points="25.30 7.40 25.53 8.11 26.24 7.85 25.83 8.48 26.47 8.87 25.72 8.94 25.82 9.68 25.30 9.14 24.78 9.68 24.88 8.94 24.13 8.87 24.77 8.48 24.36 7.85 25.07 8.11" fill="#fff"/><polygon points="34.40 6.10 34.63 6.81 35.34 6.55 34.93 7.18 35.57 7.57 34.82 7.64 34.92 8.38 34.40 7.84 33.88 8.38 33.98 7.64 33.23 7.57 33.87 7.18 33.46 6.55 34.17 6.81" fill="#fff"/><polygon points="32.00 10.10 32.14 10.52 32.55 10.36 32.31 10.73 32.68 10.96 32.25 11.00 32.30 11.43 32.00 11.12 31.70 11.43 31.75 11.00 31.32 10.96 31.69 10.73 31.45 10.36 31.86 10.52" fill="#fff"/></svg><div class="c1" style="top:13.5px">Australia</div><div class="c2" style="top:13.5px">Oceania</div><div class="c3" style="top:13.5px">4</div><div class="ln"></div></div>
<div class="row" style="height:49px"><svg class="fl" style="top:12.8px" width="40" height="24" viewBox="0 0 40 24"><rect width="40" height="8" fill="#000"/><rect y="8" width="40" height="8" fill="#d6141a"/><rect y="16" width="40" height="8" fill="#fcc72c"/></svg><div class="c1" style="top:13.5px">Germany | <a>view</a></div><div class="c2" style="top:13.5px">Europe</div><div class="c3" style="top:13.5px">3</div><div class="ln"></div></div>
<div class="row" style="height:51px"><svg class="fl" style="top:12.3px" width="40" height="27" viewBox="0 0 40 27"><rect width="13.4" height="27" fill="#0a1f86"/><rect x="26.6" width="13.4" height="27" fill="#e42b3b"/></svg><div class="c1" style="top:13.5px">France</div><div class="c2" style="top:13.5px">Europe</div><div class="c3" style="top:13.5px">3</div><div class="ln"></div></div>
<div class="row" style="height:51px"><svg class="fl" style="top:12.3px" width="40" height="27" viewBox="0 0 40 27"><rect width="40" height="27" fill="#bd1624"/><rect y="6.750" width="40" height="13.5" fill="#fcbc27"/><rect x="8.3" y="10.3" width="1.5" height="8" fill="#b8a684"/><rect x="17.3" y="10.3" width="1.5" height="8" fill="#b8a684"/><rect x="7.9" y="17.3" width="2.3" height="1" fill="#a33"/><rect x="16.9" y="17.3" width="2.3" height="1" fill="#a33"/><path d="M10.6 10.800h6v5c0 2.1-1.3 3.2-3 3.200s-3-1.1-3-3.200z" fill="#b8503a"/><rect x="13.6" y="10.8" width="3" height="3.6" fill="#d9ccd2"/><rect x="10.6" y="14.4" width="3" height="2.5" fill="#c9962a"/><path d="M11.3 10.800c0-1.7 1-2.6 2.3-2.600s2.3.9 2.3 2.600z" fill="#c0872c"/><rect x="13.2" y="7.3" width=".8" height="1.2" fill="#a33"/></svg><div class="c1" style="top:13.5px">Spain</div><div class="c2" style="top:13.5px">Europe</div><div class="c3" style="top:13.5px">2</div><div class="ln"></div></div>
<div class="row" style="height:51px"><svg class="fl" style="top:12.3px" width="40" height="27" viewBox="0 0 40 27"><rect y="9" width="40" height="9" fill="#11339b"/><rect y="18" width="40" height="9" fill="#cb2c24"/></svg><div class="c1" style="top:13.5px">Russian Federation</div><div class="c2" style="top:13.5px">Europe</div><div class="c3" style="top:13.5px">1</div><div class="ln"></div></div></div>
<div class="botline"></div>
</body>
</html>
